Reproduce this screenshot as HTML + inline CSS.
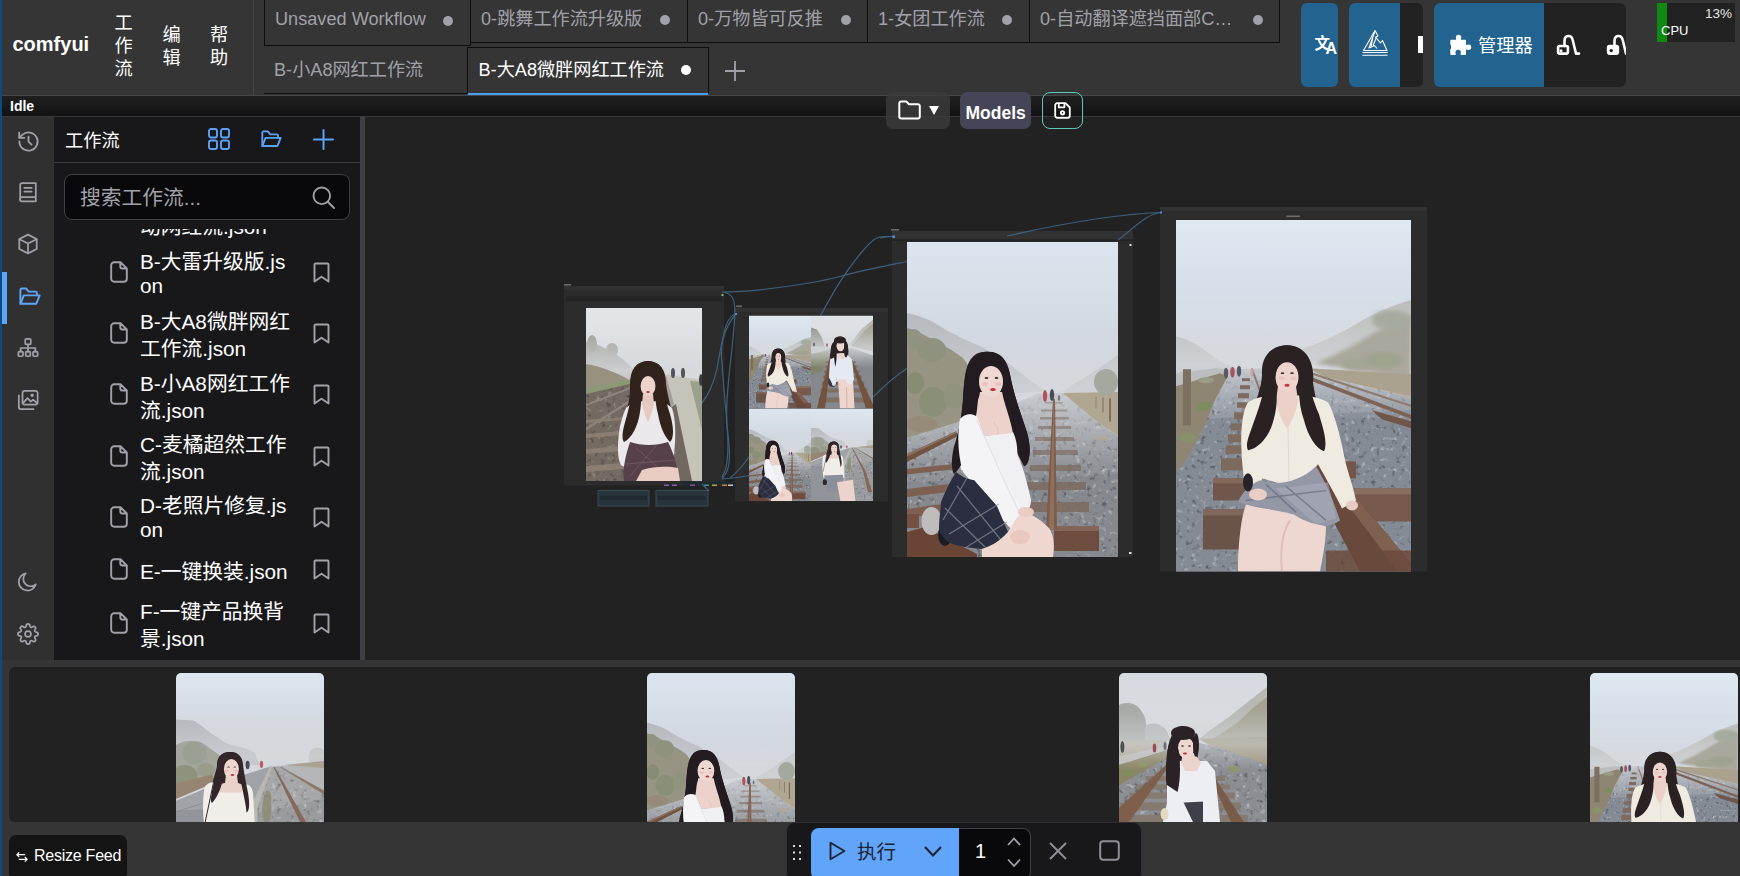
<!DOCTYPE html>
<html lang="zh-CN">
<head>
<meta charset="utf-8">
<title>ComfyUI</title>
<style>
*{box-sizing:border-box;margin:0;padding:0}
html,body{width:1740px;height:876px;overflow:hidden;background:#353535}
body{position:relative;font-family:"Liberation Sans","Noto Sans CJK SC",sans-serif;color:#fff}
.abs{position:absolute}
svg.abs{display:block;overflow:visible}
/* ---------- top bar ---------- */
#topbar{left:0;top:0;width:1740px;height:96px;background:#353535}
#leftstrip{left:0;top:0;width:2px;height:876px;background:#0b4b7d;z-index:50}
#logo{left:12.5px;top:32px;font-weight:bold;font-size:20px;line-height:24px;letter-spacing:0}
.vmenu{font-size:18.2px;line-height:23px;width:18.2px;word-break:break-all;color:#fff}
.tab{height:43px;border:1px solid #0d0d0d;border-top:none;color:#a1a1aa;font-size:18.15px;line-height:24px;white-space:nowrap}
.tab span{position:absolute;left:10px;top:7px}
.tab i{position:absolute;top:15px;width:10px;height:10px;border-radius:50%;background:#a1a1aa}
/* ---------- status ---------- */
#status{left:0;top:96px;width:1740px;height:20px;background:linear-gradient(#1f1f1f,#1a1a1a 45%,#121212)}
#status b{position:absolute;left:10px;top:2px;font-size:14px;line-height:16px}
/* ---------- sidebar ---------- */
#iconcol{left:2px;top:117px;width:52px;height:543px;background:#303030}
#panel{left:54px;top:117px;width:306px;height:543px;background:#18181b;overflow:hidden}
#splitter{left:360px;top:117px;width:5px;height:543px;background:#3e3e44}
#canvas{left:365px;top:117px;width:1375px;height:543px;background:#222}
.fname{position:absolute;left:86px;width:153px;font-size:20.75px;line-height:27px;color:#fff;word-break:break-all}
/* ---------- feed ---------- */
#feed{left:9px;top:667px;width:1740px;height:155px;background:#222;border-radius:6px 0 0 6px;overflow:hidden}
.thumb{position:absolute;top:6px;width:148px;height:149px;border-radius:7px 7px 0 0;overflow:hidden;background:#d4d6da}
</style>
</head>
<body>
<div id="topbar" class="abs"></div>
<div id="leftstrip" class="abs"></div>
<div id="logo" class="abs">comfyui</div>
<div class="abs vmenu" style="left:114.5px;top:12px">工作流</div>
<div class="abs vmenu" style="left:162.5px;top:23.5px">编辑</div>
<div class="abs vmenu" style="left:210px;top:23.5px">帮助</div>
<div class="abs" style="left:253px;top:0;width:1px;height:95px;background:#444"></div>

<!-- tabs row 1 -->
<div class="abs tab" style="left:264px;top:0;width:207px;height:46px"><span>Unsaved Workflow</span><i style="left:178px;top:16px"></i></div>
<div class="abs tab" style="left:470px;top:0;width:218px"><span>0-跳舞工作流升级版</span><i style="left:189px"></i></div>
<div class="abs tab" style="left:687px;top:0;width:181px"><span>0-万物皆可反推</span><i style="left:153px"></i></div>
<div class="abs tab" style="left:867px;top:0;width:163px"><span>1-女团工作流</span><i style="left:134px"></i></div>
<div class="abs tab" style="left:1029px;top:0;width:251px"><span>0-自动翻译遮挡面部C…</span><i style="left:223px"></i></div>
<!-- tabs row 2 -->
<div class="abs tab" style="left:264px;top:47px;width:204px;height:47px;border-left:none;border-right:none"><span style="top:11px">B-小A8网红工作流</span></div>
<div class="abs tab" style="left:467px;top:47px;width:242px;height:49px;border:1px solid #0d0d0d;border-bottom:3px solid #4a9cf0;color:#fff"><span style="top:10px;left:10.5px">B-大A8微胖网红工作流</span><i style="left:213px;top:17px;background:#fff"></i></div>
<svg class="abs" style="left:724px;top:60px" width="22" height="22" viewBox="0 0 22 22"><path d="M11 1v20M1 11h20" stroke="#a1a1aa" stroke-width="1.8" fill="none"/></svg>


<!-- top right buttons -->
<div class="abs" style="left:1301px;top:3px;width:37px;height:84px;background:#23638f;border-radius:6px;overflow:hidden">
<span class="abs" style="left:13.5px;top:30.5px;font-size:15.5px;line-height:20px;font-weight:bold;color:#fff">文</span>
<span class="abs" style="left:24.5px;top:36px;font-size:16px;line-height:20px;font-weight:bold;color:#fff">A</span>
</div>
<div class="abs" style="left:1349px;top:3px;width:74px;height:84px;background:#222;border-radius:6px;overflow:hidden">
<div class="abs" style="left:0;top:0;width:51px;height:84px;background:#23638f"></div>
<svg class="abs" style="left:13px;top:26px" width="26" height="27" viewBox="0 0 26 27"><g fill="none" stroke="#fff" stroke-width="1.100" stroke-linejoin="round"><path d="M1.500 21.500 13 1.500 16 7l-2.500 1.200L18.500 14l2-2.500 4.500 10z"/><path d="M13 2 7 19l5.500-2.500L15 19.500M11.500 5 9 18M14 9.500l-3 7"/><path d="M0.500 23.500h25M0.500 26.300h25"/></g></svg>
<div class="abs" style="left:69px;top:33px;width:8px;height:17px;background:#fff"></div>
</div>
<div class="abs" style="left:1434px;top:3px;width:192px;height:84px;background:#222;border-radius:6px;overflow:hidden">
<div class="abs" style="left:0;top:0;width:110px;height:84px;background:#23638f"></div>
<svg class="abs" style="left:14px;top:31px" width="22" height="22" viewBox="0 0 21 21"><path d="M7.500 3.200a2.600 2.600 0 0 1 5.200 0c0 .8-.4 1.300-.4 1.800 0 .4.300.6.700.6h3.200c.6 0 1 .4 1 1v3.200c0 .4.200.7.600.7.500 0 1-.400 1.800-.400a2.600 2.600 0 0 1 0 5.200c-.8 0-1.300-.400-1.800-.400-.400 0-.600.300-.600.700V19c0 .6-.4 1-1 1h-3.600c-.4 0-.7-.200-.7-.600 0-.500.400-1 .400-1.800a2.600 2.600 0 0 0-5.200 0c0 .800.400 1.300.4 1.800 0 .400-.300.600-.700.600H3.200c-.6 0-1-.4-1-1v-3.400c0-.4-.2-.7-.6-.7-.1 0 .5-.2 0 0 .8 0 1.300-.600 1.300-1.500v-2c0-.9-.5-1.500-1.300-1.500.4 0 .6-.3.600-.7V6.600c0-.6.4-1 1-1h3.900c.4 0 .7-.2.700-.6 0-.5-.3-1-.3-1.800z" fill="#fff"/></svg>
<span class="abs" style="left:44px;top:31px;font-size:18.200px;line-height:24px;color:#fff;white-space:nowrap">管理器</span>
<svg class="abs" style="left:123px;top:31px" width="22" height="21" viewBox="0 0 22 21"><g fill="none" stroke="#fff" stroke-width="2.600" stroke-linecap="round" stroke-linejoin="round"><path d="M7.500 12V7C7.500 0.500 14.500 0.500 15.700 6L19 19.600H22"/><rect x="1.100" y="12" width="9.800" height="7.600" rx="1.500"/></g><circle cx="4" cy="16.800" r="1.500" fill="#fff"/></svg>
<svg class="abs" style="left:172.500px;top:31px" width="22" height="21" viewBox="0 0 22 21"><g fill="none" stroke="#fff" stroke-width="2.600" stroke-linecap="round" stroke-linejoin="round"><path d="M7.500 12V7C7.500 0.500 14.500 0.500 15.700 6L19 19.600H22"/><rect x="1.100" y="12" width="9.800" height="7.600" rx="1.500" fill="#fff"/></g><circle cx="4.200" cy="16.600" r="1.700" fill="#222"/></svg>
</div>
<!-- cpu -->
<div class="abs" style="left:1657px;top:3px;width:78px;height:39px;background:#222;overflow:hidden">
<div class="abs" style="left:0;top:0;width:10px;height:39px;background:#0f8a10"></div>
<span class="abs" style="right:3px;top:3px;font-size:13.500px;line-height:15px;color:#e6e6e6">13%</span>
<span class="abs" style="left:4px;top:20px;font-size:13px;line-height:15px;color:#fff">CPU</span>
</div>
<!-- status bar -->
<div class="abs" style="left:0;top:95px;width:1740px;height:1px;background:#464646"></div>
<div id="status" class="abs"><b>Idle</b></div>
<div class="abs" style="left:0;top:116px;width:1740px;height:1px;background:#3a3a3a"></div>

<!-- sidebar -->
<div id="iconcol" class="abs"></div>
<div id="panel" class="abs">
<div class="abs" id="ptitle" style="left:11px;top:11.5px;font-size:18.2px;line-height:24px">工作流</div>
<svg class="abs" style="left:154px;top:11px" width="22" height="22" viewBox="0 0 22 22"><g fill="none" stroke="#5aa2f8" stroke-width="1.900"><rect x="1" y="1" width="8" height="8.500" rx="2"/><rect x="13" y="1" width="8" height="8.500" rx="2"/><rect x="1" y="12.500" width="8" height="8.500" rx="2"/><rect x="13" y="12.500" width="8" height="8.500" rx="2"/></g></svg>
<svg class="abs" style="left:206px;top:11px" width="22" height="22" viewBox="0 0 24 24"><g fill="none" stroke="#5aa2f8" stroke-width="2" stroke-linecap="round" stroke-linejoin="round"><path d="M2.500 19.500V5.200a1.500 1.500 0 0 1 1.500-1.500h4.600l2.600 3.200h7a1.500 1.500 0 0 1 1.500 1.500v2.400"/><path d="M2.600 19.600 6 10.800h16.600L19 19.600z"/></g></svg>
<svg class="abs" style="left:259px;top:12px" width="21" height="21" viewBox="0 0 21 21"><path d="M10.500 1v19M1 10.500h19" stroke="#5aa2f8" stroke-width="2" stroke-linecap="round" fill="none"/></svg>
<div class="abs" style="left:0;top:45px;width:306px;height:1px;background:#3a3a40"></div>
<div class="abs" style="left:10px;top:57px;width:286px;height:46px;background:#09090b;border:1px solid #3f3f46;border-radius:8px"><span class="abs" style="left:15px;top:9px;font-size:20.75px;line-height:27px;color:#a1a1aa;white-space:nowrap">搜索工作流...</span><svg class="abs" style="left:247px;top:11px" width="23" height="23" viewBox="0 0 23 23"><g fill="none" stroke="#a1a1aa" stroke-width="1.900" stroke-linecap="round"><circle cx="9.800" cy="9.800" r="8.300"/><path d="M16 16l6 6"/></g></svg></div>
<div class="abs" style="left:0;top:112px;width:306px;height:431px;overflow:hidden">
<div class="fname" style="top:-16px">动网红流.json</div>
<div class="fname" style="top:21px;line-height:24px">B-大雷升级版.json</div>
<div class="fname" style="top:78.5px;line-height:27px">B-大A8微胖网红工作流.json</div>
<div class="fname" style="top:140.5px;line-height:27px">B-小A8网红工作流.json</div>
<div class="fname" style="top:201.5px;line-height:27px">C-麦橘超然工作流.json</div>
<div class="fname" style="top:265px;line-height:24px">D-老照片修复.json</div>
<div class="fname" style="top:328.5px;line-height:27px">E-一键换装.json</div>
<div class="fname" style="top:368.5px;line-height:27px">F-一键产品换背景.json</div>
<svg class="abs" style="left:56px;top:32px" width="18" height="22" viewBox="0 0 18 22"><path d="M1.200 4.200a3 3 0 0 1 3-3h6.300l6.300 6.300v10.300a3 3 0 0 1-3 3H4.200a3 3 0 0 1-3-3z M10.300 1.400v4.100a2 2 0 0 0 2 2h4.300" fill="none" stroke="#a1a1aa" stroke-width="1.900" stroke-linejoin="round" stroke-linecap="round"/></svg><svg class="abs" style="left:259px;top:33px" width="17" height="21" viewBox="0 0 17 21"><path d="M1.500 19.500V2.500a1 1 0 0 1 1-1h12a1 1 0 0 1 1 1v17L8.500 14.700z" fill="none" stroke="#a1a1aa" stroke-width="1.900" stroke-linejoin="round"/></svg>
<svg class="abs" style="left:56px;top:93px" width="18" height="22" viewBox="0 0 18 22"><path d="M1.200 4.200a3 3 0 0 1 3-3h6.300l6.300 6.300v10.300a3 3 0 0 1-3 3H4.200a3 3 0 0 1-3-3z M10.300 1.400v4.100a2 2 0 0 0 2 2h4.300" fill="none" stroke="#a1a1aa" stroke-width="1.900" stroke-linejoin="round" stroke-linecap="round"/></svg><svg class="abs" style="left:259px;top:94px" width="17" height="21" viewBox="0 0 17 21"><path d="M1.500 19.500V2.500a1 1 0 0 1 1-1h12a1 1 0 0 1 1 1v17L8.500 14.700z" fill="none" stroke="#a1a1aa" stroke-width="1.900" stroke-linejoin="round"/></svg>
<svg class="abs" style="left:56px;top:154px" width="18" height="22" viewBox="0 0 18 22"><path d="M1.200 4.200a3 3 0 0 1 3-3h6.300l6.300 6.300v10.300a3 3 0 0 1-3 3H4.200a3 3 0 0 1-3-3z M10.300 1.400v4.100a2 2 0 0 0 2 2h4.300" fill="none" stroke="#a1a1aa" stroke-width="1.900" stroke-linejoin="round" stroke-linecap="round"/></svg><svg class="abs" style="left:259px;top:155px" width="17" height="21" viewBox="0 0 17 21"><path d="M1.500 19.500V2.500a1 1 0 0 1 1-1h12a1 1 0 0 1 1 1v17L8.500 14.700z" fill="none" stroke="#a1a1aa" stroke-width="1.900" stroke-linejoin="round"/></svg>
<svg class="abs" style="left:56px;top:216px" width="18" height="22" viewBox="0 0 18 22"><path d="M1.200 4.200a3 3 0 0 1 3-3h6.300l6.300 6.300v10.300a3 3 0 0 1-3 3H4.200a3 3 0 0 1-3-3z M10.300 1.400v4.100a2 2 0 0 0 2 2h4.300" fill="none" stroke="#a1a1aa" stroke-width="1.900" stroke-linejoin="round" stroke-linecap="round"/></svg><svg class="abs" style="left:259px;top:217px" width="17" height="21" viewBox="0 0 17 21"><path d="M1.500 19.500V2.500a1 1 0 0 1 1-1h12a1 1 0 0 1 1 1v17L8.500 14.700z" fill="none" stroke="#a1a1aa" stroke-width="1.900" stroke-linejoin="round"/></svg>
<svg class="abs" style="left:56px;top:277px" width="18" height="22" viewBox="0 0 18 22"><path d="M1.200 4.200a3 3 0 0 1 3-3h6.300l6.300 6.300v10.300a3 3 0 0 1-3 3H4.200a3 3 0 0 1-3-3z M10.300 1.400v4.100a2 2 0 0 0 2 2h4.300" fill="none" stroke="#a1a1aa" stroke-width="1.900" stroke-linejoin="round" stroke-linecap="round"/></svg><svg class="abs" style="left:259px;top:278px" width="17" height="21" viewBox="0 0 17 21"><path d="M1.500 19.500V2.500a1 1 0 0 1 1-1h12a1 1 0 0 1 1 1v17L8.500 14.700z" fill="none" stroke="#a1a1aa" stroke-width="1.900" stroke-linejoin="round"/></svg>
<svg class="abs" style="left:56px;top:329px" width="18" height="22" viewBox="0 0 18 22"><path d="M1.200 4.200a3 3 0 0 1 3-3h6.300l6.300 6.300v10.300a3 3 0 0 1-3 3H4.200a3 3 0 0 1-3-3z M10.300 1.400v4.100a2 2 0 0 0 2 2h4.300" fill="none" stroke="#a1a1aa" stroke-width="1.900" stroke-linejoin="round" stroke-linecap="round"/></svg><svg class="abs" style="left:259px;top:330px" width="17" height="21" viewBox="0 0 17 21"><path d="M1.500 19.500V2.500a1 1 0 0 1 1-1h12a1 1 0 0 1 1 1v17L8.500 14.700z" fill="none" stroke="#a1a1aa" stroke-width="1.900" stroke-linejoin="round"/></svg>
<svg class="abs" style="left:56px;top:383px" width="18" height="22" viewBox="0 0 18 22"><path d="M1.200 4.200a3 3 0 0 1 3-3h6.300l6.300 6.300v10.300a3 3 0 0 1-3 3H4.200a3 3 0 0 1-3-3z M10.300 1.400v4.100a2 2 0 0 0 2 2h4.300" fill="none" stroke="#a1a1aa" stroke-width="1.900" stroke-linejoin="round" stroke-linecap="round"/></svg><svg class="abs" style="left:259px;top:384px" width="17" height="21" viewBox="0 0 17 21"><path d="M1.500 19.500V2.500a1 1 0 0 1 1-1h12a1 1 0 0 1 1 1v17L8.500 14.700z" fill="none" stroke="#a1a1aa" stroke-width="1.900" stroke-linejoin="round"/></svg>
</div>
</div>

<!-- sidebar icons -->
<div class="abs" style="left:2px;top:272px;width:5px;height:52px;background:#60a5fa"></div>
<svg class="abs ic" style="left:16.5px;top:129.5px" width="23" height="23" viewBox="0 0 24 24"><g fill="none" stroke="#a1a1aa" stroke-width="1.9" stroke-linecap="round" stroke-linejoin="round"><path d="M2.5 12a9.5 9.5 0 1 0 3-6.9L2.5 8"/><path d="M2.3 2.8V8.2H7.7"/><path d="M12 7v5.2l3.2 3"/></g></svg>
<svg class="abs ic" style="left:17px;top:181px" width="22" height="22" viewBox="0 0 24 24"><g fill="none" stroke="#a1a1aa" stroke-width="1.9" stroke-linecap="round" stroke-linejoin="round"><path d="M3.5 19.5V4.2a2 2 0 0 1 2-2h15v20h-15a2 2 0 0 1 0-4.6h15"/><path d="M8 7.5h8M8 11.5h8"/></g></svg>
<svg class="abs ic" style="left:17px;top:233px" width="22" height="22" viewBox="0 0 24 24"><g fill="none" stroke="#a1a1aa" stroke-width="1.9" stroke-linecap="round" stroke-linejoin="round"><path d="M12 1.8 21.5 6.6v10.8L12 22.2 2.5 17.4V6.6z"/><path d="M2.8 6.8 12 11.5l9.2-4.7M12 11.5v10.4"/></g></svg>
<svg class="abs ic" style="left:18px;top:285px" width="23" height="23" viewBox="0 0 24 24"><g fill="none" stroke="#60a5fa" stroke-width="2" stroke-linecap="round" stroke-linejoin="round"><path d="M2.5 19.5V5.2a1.5 1.5 0 0 1 1.5-1.5h4.6l2.6 3.2h7a1.5 1.5 0 0 1 1.5 1.5v2.4"/><path d="M2.6 19.6 6 10.8h16.6L19 19.6z"/></g></svg>
<svg class="abs ic" style="left:17px;top:337px" width="22" height="22" viewBox="0 0 24 24"><g fill="none" stroke="#a1a1aa" stroke-width="1.9" stroke-linecap="round" stroke-linejoin="round"><rect x="9" y="2" width="6" height="6" rx="1"/><rect x="1.5" y="16" width="5" height="5" rx="1"/><rect x="9.5" y="16" width="5" height="5" rx="1"/><rect x="17.5" y="16" width="5" height="5" rx="1"/><path d="M12 8v8M4 16v-4h16v4"/></g></svg>
<svg class="abs ic" style="left:17px;top:389px" width="22" height="22" viewBox="0 0 24 24"><g fill="none" stroke="#a1a1aa" stroke-width="1.9" stroke-linecap="round" stroke-linejoin="round"><rect x="6" y="2" width="16.5" height="15" rx="2.5"/><path d="M2 7v12.5a2.5 2.5 0 0 0 2.500 2.500H18"/><path d="M6.500 15.500 11.500 10l3.500 3.700 2.500-2.200 4.500 4"/><circle cx="16.500" cy="6.800" r="1"/></g></svg>
<svg class="abs ic" style="left:17px;top:571px" width="22" height="22" viewBox="0 0 24 24"><path d="M20.500 14.500A9.500 9.500 0 1 1 9.500 2.500 7.600 7.600 0 0 0 20.500 14.500z" fill="none" stroke="#a1a1aa" stroke-width="1.9" stroke-linejoin="round"/></svg>
<svg class="abs ic" style="left:17px;top:623px" width="22" height="22" viewBox="0 0 24 24"><g fill="none" stroke="#a1a1aa" stroke-width="1.9" stroke-linecap="round" stroke-linejoin="round"><circle cx="12" cy="12" r="3.200"/><path d="M19.400 15a1.650 1.650 0 0 0 .330 1.820l.060.060a2 2 0 1 1-2.830 2.830l-.060-.060a1.650 1.650 0 0 0-1.820-.330 1.650 1.650 0 0 0-1 1.510V21a2 2 0 1 1-4 0v-.090A1.650 1.650 0 0 0 9 19.400a1.650 1.650 0 0 0-1.820.330l-.060.060a2 2 0 1 1-2.830-2.830l.060-.060A1.650 1.650 0 0 0 4.680 15a1.650 1.650 0 0 0-1.510-1H3a2 2 0 1 1 0-4h.090A1.650 1.650 0 0 0 4.600 9a1.650 1.650 0 0 0-.330-1.820l-.060-.060a2 2 0 1 1 2.830-2.830l.060.060A1.650 1.650 0 0 0 9 4.680a1.650 1.650 0 0 0 1-1.510V3a2 2 0 1 1 4 0v.090a1.650 1.650 0 0 0 1 1.510 1.650 1.650 0 0 0 1.820-.330l.060-.060a2 2 0 1 1 2.830 2.830l-.060.060A1.650 1.650 0 0 0 19.400 9a1.650 1.650 0 0 0 1.510 1H21a2 2 0 1 1 0 4h-.090a1.650 1.650 0 0 0-1.510 1z"/></g></svg>
<div id="splitter" class="abs"></div>
<div id="canvas" class="abs"></div>
<!--CANVAS--><svg class="abs" style="left:365px;top:117px" width="1375" height="543" viewBox="0 0 1375 543" overflow="hidden"><defs><filter id="bl0.4" x="-5%" y="-5%" width="110%" height="110%"><feGaussianBlur stdDeviation="0.4"/></filter><filter id="bl0.5" x="-5%" y="-5%" width="110%" height="110%"><feGaussianBlur stdDeviation="0.5"/></filter><filter id="bl0.7" x="-5%" y="-5%" width="110%" height="110%"><feGaussianBlur stdDeviation="0.7"/></filter><filter id="bl0.8" x="-5%" y="-5%" width="110%" height="110%"><feGaussianBlur stdDeviation="0.8"/></filter><filter id="bl1" x="-5%" y="-5%" width="110%" height="110%"><feGaussianBlur stdDeviation="1"/></filter><filter id="bl2" x="-5%" y="-5%" width="110%" height="110%"><feGaussianBlur stdDeviation="2"/></filter><filter id="gr1" x="0" y="0" width="100%" height="100%"><feTurbulence type="fractalNoise" baseFrequency="0.2" numOctaves="2" seed="3" result="n"/><feColorMatrix in="n" type="matrix" values="0 0 0 0 1  0 0 0 0 1  0 0 0 0 1  2.4 0 0 0 -1.42" result="a"/><feComposite in="SourceGraphic" in2="a" operator="in"/></filter><filter id="gr2" x="0" y="0" width="100%" height="100%"><feTurbulence type="fractalNoise" baseFrequency="0.19" numOctaves="2" seed="11" result="n"/><feColorMatrix in="n" type="matrix" values="0 0 0 0 1  0 0 0 0 1  0 0 0 0 1  2.4 0 0 0 -1.5" result="a"/><feComposite in="SourceGraphic" in2="a" operator="in"/></filter><linearGradient id="fog" x1="0" y1="0" x2="0" y2="1"><stop offset="0" stop-color="#d6d9dd" stop-opacity="0"/><stop offset=".58" stop-color="#d6d9dd" stop-opacity=".78"/><stop offset="1" stop-color="#d6d9dd" stop-opacity="0"/></linearGradient></defs><rect x="199" y="169" width="160" height="199.5" fill="#2c2c2c"/><rect x="199" y="169" width="160" height="4" fill="#323232"/><rect x="201" y="179" width="156" height="5.500" fill="#242424"/><rect x="370" y="191" width="153" height="193.5" fill="#2c2c2c"/><rect x="370" y="191" width="153" height="4" fill="#323232"/><rect x="527" y="114" width="241" height="326" fill="#2c2c2c"/><rect x="527" y="114" width="241" height="8.5" fill="#323232"/><rect x="527" y="122.5" width="241" height="1.5" fill="#232323"/><rect x="795" y="90" width="267" height="364.5" fill="#2c2c2c"/><rect x="795" y="90" width="267" height="4" fill="#323232"/><rect x="199" y="167" width="7" height="1.600" fill="#6a6a6a"/><rect x="371" y="188.5" width="6" height="1.600" fill="#6a6a6a"/><rect x="526" y="112" width="8" height="1.600" fill="#6a6a6a"/><rect x="921" y="98.5" width="14" height="1.600" fill="#6a6a6a"/><rect x="233" y="373.5" width="51" height="15.500" fill="#27343b" stroke="#3a4b54" stroke-width="1"/><rect x="235" y="379" width="47" height="4" fill="#1f292e"/><rect x="291" y="373.5" width="52" height="15.500" fill="#27343b" stroke="#3a4b54" stroke-width="1"/><rect x="293" y="379" width="48" height="4" fill="#1f292e"/><rect x="316" y="364.5" width="54" height="4.500" fill="#1d2a30"/><rect x="299" y="367.5" width="5" height="1.500" fill="#8a5fb0"/><rect x="307" y="367.5" width="5" height="1.500" fill="#8a5fb0"/><rect x="325" y="367.5" width="5" height="1.500" fill="#7b4fa0"/><rect x="339" y="367.5" width="5" height="1.500" fill="#3f8f8a"/><rect x="347" y="367.5" width="5" height="1.500" fill="#b9a23c"/><rect x="357" y="367.5" width="5" height="1.500" fill="#c78a3c"/><rect x="363" y="367.5" width="5" height="1.500" fill="#c7c7c7"/><g fill="none" stroke="#3d5f7b" stroke-width="1.25"><path d="M357.5 175 C 395 175, 455 165, 477 159 S 525 148, 542 144.5"/><path d="M753 123 C 765 115, 780 97, 796 95.5"/><path d="M642 119 C 695 107, 755 97, 796 95.5"/><path d="M455.5 198.5 C 467 178, 477 159, 495.5 136.5 S 515 121, 528.5 119.5"/><path d="M357.5 175 C 368 176, 371 183, 369.5 203 C 367 243, 359 283, 362.5 313 C 365 333, 367 353, 357 361.5"/><path d="M371 197 C 361 199, 359 213, 351.7 253 C 347 273, 341 281, 336.5 286.5"/><path d="M371 197 C 357 213, 355 233, 357 245 C 359 283, 365 323, 362.5 338 C 362 351, 359 357, 357 360"/><path d="M357 362 C 370 361, 377 360, 384 358.5"/><path d="M365 361 C 373 355, 379 347, 384 340"/><path d="M508 280 C 520 268, 530 259, 542 251.5"/><path d="M515 121 L 528 119"/><path d="M337 367 C 341 371, 343 373, 344 374"/></g><rect x="527.5" y="118.5" width="2.500" height="2.500" fill="#4f8fd0"/><rect x="356.5" y="177" width="2" height="2" fill="#6fbf5f"/><rect x="370" y="196" width="2" height="2" fill="#4f8fd0"/><rect x="795" y="94.5" width="2" height="2" fill="#4f8fd0"/><svg x="221" y="191" width="116" height="173" viewBox="0 0 116 173" preserveAspectRatio="none" overflow="hidden"><defs><linearGradient id="g1" x1="0" y1="0" x2="0" y2="1"><stop offset="0" stop-color="#e2e6e9"/><stop offset="0.3" stop-color="#dcdfe1"/><stop offset="0.45" stop-color="#d6d7d8"/><stop offset="1" stop-color="#d6d7d8"/></linearGradient></defs><rect width="116" height="173" fill="url(#g1)"/><g filter="url(#bl0.7)"><path d="M0 34 C8 34 14 38 22 42 C32 46 40 54 48 62 C54 68 58 72 62 76 L0 88Z" fill="#a9a8a3" /><ellipse cx="6" cy="36" rx="5" ry="9" fill="#a09f9a" /><ellipse cx="26" cy="42" rx="6" ry="7" fill="#a5a49f" /><rect x="0" y="20" width="116" height="75" fill="url(#fog)"/><path d="M0 56 C14 58 28 64 40 70 L52 78 L0 86Z" fill="#96927f" /><polygon points="0,80 46,71 50,75 0,88" fill="#8d9976" /><polygon points="0,86 52,74 78,70 100,173 0,173" fill="#736a62" /><polygon points="0,86 52,74 78,70 100,173 0,173" fill="#3a3530" filter="url(#gr1)"/><polygon points="0,86 52,74 78,70 100,173 0,173" fill="#b9b2aa" filter="url(#gr2)"/><line x1="0" y1="97" x2="52" y2="77" stroke="#8e837b" stroke-width="2" stroke-linecap="round" /><line x1="0" y1="121" x2="60" y2="83" stroke="#8e837b" stroke-width="2.5" stroke-linecap="round" /><polygon points="0,112 48,108 48,111 0,115" fill="#8f8073" opacity=".85"/><polygon points="0,126 48,122 48,126 0,130" fill="#8f8073" opacity=".85"/><polygon points="0,141 48,137 48,142 0,146" fill="#8f8073" opacity=".85"/><polygon points="0,158 48,154 48,160 0,164" fill="#8f8073" opacity=".85"/><polygon points="76,66 116,72 116,173 100,173" fill="#c6c3b9" /><polygon points="104,73 116,74 116,122" fill="#9aa08c" /><polygon points="84,100 94,173 106,173 90,96" fill="#6f6861" /><polygon points="78,70 84,100 88,96 80,68" fill="#a19e97" /><ellipse cx="87" cy="65" rx="2" ry="5" fill="#50535b" /><ellipse cx="97" cy="65" rx="2" ry="5" fill="#53555c" /><ellipse cx="115" cy="72" rx="2" ry="6" fill="#3c3d46" /><path d="M62 53 C74 53 80 62 80 76 C82 92 88 106 88 122 C88 130 86 134 84 134 C78 128 74 118 72 108 L52 108 C50 120 44 130 38 134 C34 128 36 116 40 104 C44 92 44 84 44 76 C44 62 50 53 62 53Z" fill="#33231f" /><path d="M40 100 C46 94 54 92 62 94 C70 92 80 94 86 100 C90 112 90 130 88 146 C86 154 84 158 80 160 L44 160 L36 158 C30 152 32 130 34 118 C36 110 38 104 40 100Z" fill="#eae8eb" /><path d="M57 86 L67 86 L68 96 C66 104 64 110 62 114 C60 110 58 104 56 96Z" fill="#e6c9c0" /><ellipse cx="62" cy="78" rx="7.5" ry="10" fill="#ecd3cb" /><path d="M62 53 C52 53 46 62 46 76 C46 90 42 104 38 118 C36 126 36 132 38 134 C46 130 52 118 54 104 C56 92 55 84 54 78 C55 72 58 68 63 66 C67 68 70 72 70 78 C69 86 69 94 72 106 C74 118 78 128 84 134 C88 130 88 120 84 106 C80 94 78 86 78 76 C78 62 72 53 62 53Z" fill="#33231f" /><ellipse cx="62" cy="84" rx="1.8" ry="1" fill="#c22d38" /><path d="M44 134 C56 138 70 138 82 134 C88 146 92 160 92 168 L90 173 L38 173 C36 162 40 146 44 134Z" fill="#574049" /><path d="M50 140 L84 170 M70 138 L44 168 M40 156 L90 152" fill="none" stroke="#7c5c66" stroke-width="1" opacity=".7"/><path d="M56 162 C68 158 82 158 92 160 L94 173 L50 173Z" fill="#e9cdc4" /></g></svg><svg x="384" y="198.5" width="62" height="93" viewBox="0 0 235 351" preserveAspectRatio="none" overflow="hidden"><defs><linearGradient id="g2" x1="0" y1="0" x2="0" y2="1"><stop offset="0" stop-color="#dfe9f2"/><stop offset="0.2" stop-color="#d6dfe9"/><stop offset="0.4" stop-color="#d6dbe1"/><stop offset="1" stop-color="#d6dbe1"/></linearGradient></defs><rect width="235" height="351" fill="url(#g2)"/><g filter="url(#bl0.7)"><path d="M235 80 C215 86 200 92 180 104 C160 116 140 124 118 132 L96 142 L235 150Z" fill="#b9bab8" /><path d="M0 116 C10 118 22 124 34 134 C44 142 54 146 64 149 L0 154Z" fill="#b1b6b8" /><polygon points="0,158 60,149 125,147 235,164 235,351 0,351" fill="#9196a0" /><path d="M0 200 L235 190 L235 351 L0 351Z" fill="#828892" opacity=".8"/><polygon points="132,148 235,156 235,178 150,157" fill="#a89f8b" /><polygon points="0,158 60,149 125,147 235,164 235,351 0,351" fill="#3c4048" filter="url(#gr1)"/><polygon points="0,158 60,149 125,147 235,164 235,351 0,351" fill="#d4d7db" filter="url(#gr2)"/><rect x="0" y="70" width="235" height="130" fill="url(#fog)"/><path d="M235 96 C218 101 200 111 184 121 C170 129 158 135 140 143 L235 160Z" fill="#aaa79c" filter="url(#bl2)"/><ellipse cx="216" cy="100" rx="20" ry="10" fill="#a6ab9f" filter="url(#bl2)"/><ellipse cx="207" cy="140" rx="20" ry="8" fill="#9ea38f" filter="url(#bl2)"/><ellipse cx="180" cy="144" rx="13" ry="6" fill="#a2a692" filter="url(#bl2)"/><polygon points="132,148 235,154 235,176 150,157" fill="#aaa18e" /><polygon points="0,153 40,148 56,150 0,172" fill="#bcbdbe" /><path d="M0 166 L44 153 L52 156 C44 170 38 180 34 192 C28 208 20 224 12 236 L0 252Z" fill="#8f8573" /><ellipse cx="28" cy="186" rx="8" ry="5" fill="#7f8c62" /><ellipse cx="12" cy="218" rx="8" ry="5" fill="#86936a" /><ellipse cx="30" cy="160" rx="8" ry="3" fill="#9a9d86" /><rect x="7" y="149" width="8" height="56" fill="#7b6f60" /><line x1="132" y1="152" x2="236" y2="186" stroke="#8e7b6e" stroke-width="2.2" stroke-linecap="round" /><line x1="136" y1="159" x2="236" y2="197" stroke="#7c6456" stroke-width="3.6" stroke-linecap="round" /><polygon points="196,190 235,201 235,208 206,199" fill="#705649" /><rect x="66" y="158" width="8" height="3" fill="#7e6a5f" /><rect x="64" y="165" width="10" height="4" fill="#7e6a5f" /><rect x="62" y="173" width="11" height="5" fill="#7e6a5f" /><rect x="61" y="182" width="11" height="5.5" fill="#7e6a5f" /><rect x="58" y="192" width="14" height="7" fill="#7e6a5f" /><rect x="55" y="203" width="17" height="7" fill="#7e6a5f" /><rect x="52" y="214" width="20" height="8" fill="#7e6a5f" /><rect x="49.5" y="225" width="22.5" height="8.5" fill="#7e6a5f" /><rect x="45" y="238" width="29" height="12" fill="#7e6a5f" /><rect x="37" y="258" width="48" height="22" fill="#6f564c" /><rect x="37" y="258" width="48" height="5" fill="#84695d" /><rect x="27" y="289" width="60" height="40" fill="#6b5249" /><rect x="27" y="289" width="60" height="6" fill="#82675b" /><rect x="172" y="268" width="64" height="33" fill="#775a4e" /><rect x="172" y="268" width="64" height="6" fill="#8a6e61" /><rect x="167" y="241" width="13" height="17" fill="#735549" /><line x1="76" y1="149" x2="86" y2="176" stroke="#8c786c" stroke-width="2" stroke-linecap="round" /><polygon points="86,152 90,152 168,262 236,344 236,351 184,351 141,270" fill="#6a4a3c" /><polygon points="146,250 156,248 236,344 236,351 222,351" fill="#80604f" /><polygon points="150,330 236,330 236,351 150,351" fill="#6b4a3d" opacity=".85"/><ellipse cx="50" cy="153" rx="2.2" ry="5.5" fill="#5c5863" /><ellipse cx="56.5" cy="152" rx="2.2" ry="5.5" fill="#a8535e" /><ellipse cx="63" cy="151" rx="2.2" ry="5.5" fill="#525866" /><ellipse cx="76" cy="152" rx="1.6" ry="4.5" fill="#c9a3ab" /><path d="M111 125 C130 125 139 142 137 162 C139 180 146 196 149 212 C151 222 152 228 148 231 C138 228 128 216 126 200 L96 200 C94 216 84 226 72 230 C68 224 72 210 75 196 C80 180 86 166 86 154 C85 138 94 125 111 125Z" fill="#2a2124" /><path d="M72 182 C82 176 96 174 111 176 C126 174 142 176 152 182 C160 196 166 224 170 244 C174 258 178 270 180 280 L166 288 C160 276 150 258 142 244 L139 248 C132 256 120 262 111 266 C102 262 92 260 86 258 L84 272 L70 270 C66 250 64 220 66 204 C67 194 69 187 72 182Z" fill="#f0ebe1" /><path d="M112 206 L113 262" fill="none" stroke="#ded8cc" stroke-width="1"/><path d="M102 166 L120 166 L122 180 C120 194 114 204 111 208 C108 204 102 194 100 180Z" fill="#ebd0c8" /><ellipse cx="111" cy="157" rx="11.5" ry="15" fill="#edd5ce" /><ellipse cx="105.5" cy="158" rx="3" ry="2" fill="#e7bcb8" opacity=".7"/><ellipse cx="117" cy="158" rx="3" ry="2" fill="#e7bcb8" opacity=".7"/><ellipse cx="106.5" cy="153" rx="1.8" ry="0.9" fill="#3a2c2e" /><ellipse cx="116" cy="153" rx="1.8" ry="0.9" fill="#3a2c2e" /><ellipse cx="111" cy="165" rx="2.6" ry="1.5" fill="#c4303a" /><path d="M111 125 C96 125 87 138 89 156 C89 172 82 190 77 204 C73 216 69 224 72 230 C83 228 94 216 98 198 C102 184 101 170 99 158 C100 148 104 141 112 137 C119 141 123 148 124 158 C122 170 123 186 128 200 C132 216 140 228 148 231 C152 222 147 208 143 194 C137 180 133 168 134 154 C135 138 126 125 111 125Z" fill="#2a2124" /><path d="M84 260 C100 266 124 262 140 246 C150 262 158 282 164 300 C150 310 132 306 118 294 C104 290 84 288 62 282 C66 272 74 264 84 260Z" fill="#9497a6" /><path d="M100 268 L152 262 L160 298 L140 304Z" fill="#a9adba" opacity=".55"/><path d="M90 264 L120 292 M110 266 L150 300 M70 280 L150 270" fill="none" stroke="#5f6579" stroke-width="1.5" opacity=".6"/><path d="M70 284 C84 288 104 290 118 294 C132 304 146 304 150 306 C150 322 146 340 144 351 L62 351 C62 330 64 300 70 284Z" fill="#eed7d1" /><path d="M106 351 C104 330 106 312 114 300" fill="none" stroke="#d9b9b1" stroke-width="2" opacity=".8"/><ellipse cx="82" cy="274" rx="9" ry="6" fill="#eacdc5" /><ellipse cx="176" cy="285" rx="6" ry="5" fill="#e9cbc3" /><ellipse cx="72" cy="262" rx="5" ry="9" fill="#26242a" /></g></svg><svg x="446" y="198.5" width="62" height="93" viewBox="0 0 62 93" preserveAspectRatio="none" overflow="hidden"><defs><linearGradient id="g3" x1="0" y1="0" x2="0" y2="1"><stop offset="0" stop-color="#dde1e6"/><stop offset="0.18" stop-color="#dfe1e4"/><stop offset="0.33" stop-color="#dadbdc"/><stop offset="1" stop-color="#dadbdc"/></linearGradient></defs><rect width="62" height="93" fill="url(#g3)"/><g filter="url(#bl0.4)"><polygon points="62,4 50,14 38,30 62,32" fill="#b7b7b2" /><polygon points="0,12 6,14 11,22 14,32 0,34" fill="#8f9287" /><polygon points="62,8 54,15 46,24 40,31 62,36" fill="#a19d8d" /><polygon points="0,31 18,31 14,38 0,40" fill="#bbbbb9" /><polygon points="0,40 19,33 42,33 62,40 62,93 0,93" fill="#85888c" /><polygon points="0,38 16,36 19,40 10,56 0,60" fill="#80836a" /><rect x="0" y="8" width="62" height="44" fill="url(#fog)"/><rect x="14.8" y="46" width="30.04" height="1.5" fill="#7d6f64" /><rect x="14" y="50" width="32.52" height="2" fill="#7d6f64" /><rect x="13" y="55" width="35.62" height="2.5" fill="#7d6f64" /><rect x="12" y="60" width="38.72" height="3" fill="#7d6f64" /><rect x="10.8" y="66" width="42.44" height="3.5" fill="#7d6f64" /><rect x="9.4" y="73" width="46.78" height="4" fill="#7d6f64" /><rect x="7.6" y="82" width="52.36" height="5" fill="#7d6f64" /><polygon points="19,40 20.5,40 14,93 6,93" fill="#73523f" /><polygon points="39.5,44 41,44 62,89 62,93 55,93" fill="#73523f" /><ellipse cx="3" cy="29" rx="0.8" ry="2" fill="#50535c" /><ellipse cx="16" cy="29.5" rx="0.8" ry="1.8" fill="#a04a55" /><ellipse cx="29" cy="36" rx="8.5" ry="15" fill="#2a2024" /><ellipse cx="23" cy="44" rx="4" ry="12" fill="#2a2024" /><polygon points="19,43 25,38 35,38 41,44 42,62 36,66 24,66 19,60" fill="#e5e9f1" /><ellipse cx="30.5" cy="40.5" rx="4" ry="3" fill="#ebd2c9" /><ellipse cx="29.5" cy="30.5" rx="4" ry="5.2" fill="#edd6cf" /><ellipse cx="29" cy="24.5" rx="6" ry="3.5" fill="#2a2024" /><ellipse cx="22.5" cy="40" rx="3.2" ry="13" fill="#2a2024" /><ellipse cx="35" cy="34" rx="2" ry="8" fill="#2a2024" /><ellipse cx="21.5" cy="66" rx="4.5" ry="5.5" fill="#3a3a42" /><ellipse cx="23" cy="68" rx="2" ry="2.5" fill="#d9dade" /><polygon points="27,64 42,63 43.5,93 29,93" fill="#edd4cc" /><polygon points="19,44 23,42 26,66 22,70 18,62" fill="#e5e9f1" /><polygon points="37,42 41,44 43,64 39,70 35,66" fill="#e5e9f1" /><line x1="35.5" y1="72" x2="36" y2="93" stroke="#d2b1a8" stroke-width="1" stroke-linecap="round" /></g></svg><svg x="384" y="291.5" width="62" height="92.5" viewBox="0 0 211 315" preserveAspectRatio="none" overflow="hidden"><defs><linearGradient id="g4" x1="0" y1="0" x2="0" y2="1"><stop offset="0" stop-color="#dce5ef"/><stop offset="0.3" stop-color="#d1d8e1"/><stop offset="0.48" stop-color="#d2d6db"/><stop offset="1" stop-color="#d2d6db"/></linearGradient></defs><rect width="211" height="315" fill="url(#g4)"/><g filter="url(#bl0.7)"><path d="M0 71 C10 73 18 76 26 80 C36 86 42 90 49 93 C58 98 66 101 73 104 C84 110 92 116 101 121 C110 128 116 133 123 138 L138 149 L0 160Z" fill="#b0b4b8" /><path d="M211 113 C200 120 194 125 186 130 C178 136 172 139 167 142 L154 150 L211 158Z" fill="#b9bcbd" /><polygon points="0,196 52,180 74,176 130,152 158,151 188,178 211,194 211,315 0,315" fill="#8f9398" /><polygon points="0,240 211,232 211,315 0,315" fill="#83878c" opacity=".75"/><polygon points="0,196 52,180 74,176 130,152 158,151 188,178 211,194 211,315 0,315" fill="#3c4048" filter="url(#gr1)"/><polygon points="0,196 52,180 74,176 130,152 158,151 188,178 211,194 211,315 0,315" fill="#d4d7db" filter="url(#gr2)"/><ellipse cx="195" cy="196" rx="8" ry="3" fill="#9b917f" /><rect x="0" y="55" width="211" height="170" fill="url(#fog)"/><path d="M0 86 C8 88 14 91 21 95 C30 100 35 103 41 106 C48 110 52 113 56 116 C64 126 70 140 74 178 L52 180 L0 196Z" fill="#989483" /><ellipse cx="25" cy="108" rx="14" ry="12" fill="#8e927e" /><ellipse cx="7" cy="97" rx="8" ry="10" fill="#8f937f" /><ellipse cx="26" cy="160" rx="14" ry="15" fill="#8a8f78" /><ellipse cx="8" cy="141" rx="9" ry="11" fill="#878c74" /><ellipse cx="47" cy="154" rx="10" ry="13" fill="#90947e" /><ellipse cx="14" cy="182" rx="16" ry="8" fill="#968b78" /><polygon points="156,151 211,150 211,194 188,178" fill="#b0a792" /><ellipse cx="199" cy="140" rx="12" ry="13" fill="#a3a99f" /><line x1="203" y1="157" x2="203" y2="179" stroke="#6c5a4c" stroke-width="1.4" stroke-linecap="round" /><line x1="196" y1="156" x2="196" y2="170" stroke="#7c6a5c" stroke-width="1" stroke-linecap="round" /><line x1="189" y1="155" x2="189" y2="166" stroke="#8c7a6c" stroke-width="0.8" stroke-linecap="round" /><polygon points="0,212 49,189.5 51,194 0,220" fill="#70533f" /><polygon points="0,212 49,189.5 49.5,191 0,214.5" fill="#8d7160" /><polygon points="0,227 46,222 46,227.5 0,232.5" fill="#7e6152" /><polygon points="0,247 42,242 42,250 0,255" fill="#7e6152" /><polygon points="0,267 34,262 34,271 0,276" fill="#7e6152" /><rect x="138" y="160" width="18" height="1.5" fill="#7d6a60" opacity="0.45"/><rect x="134" y="167.5" width="26" height="2" fill="#7d6a60" opacity="0.48375"/><rect x="133" y="175" width="29" height="2.5" fill="#7d6a60" opacity="0.5175"/><rect x="131" y="184" width="33" height="3" fill="#7d6a60" opacity="0.558"/><rect x="128" y="195" width="39" height="4" fill="#7d6a60" opacity="0.6075"/><rect x="126" y="208" width="45" height="5" fill="#7d6a60" opacity="0.666"/><rect x="123" y="223" width="51" height="6" fill="#7d6a60" opacity="0.7335"/><rect x="120" y="240" width="59" height="8" fill="#7d6a60" opacity="0.81"/><rect x="118" y="260" width="64" height="10" fill="#7d6a60" opacity="0.9"/><rect x="147" y="284" width="45" height="25" fill="#6e4d41" /><rect x="147" y="284" width="45" height="5" fill="#85655a" /><polygon points="146,157 148,157 150,288 139,288" fill="#7d5b48" /><polygon points="146.5,157 147.5,157 147,288 142,288" fill="#97786a" opacity=".7"/><ellipse cx="138" cy="154" rx="2.2" ry="6" fill="#b45058" /><ellipse cx="145" cy="153" rx="2.2" ry="6" fill="#4a4c58" /><ellipse cx="152" cy="156" rx="1.2" ry="3" fill="#77747c" /><path d="M0 290 L18 285 L70 312 L70 315 L0 315Z" fill="#6a4435" /><rect x="0" y="272" width="12" height="14" fill="#75503f" /><ellipse cx="24.5" cy="279" rx="10" ry="14" fill="#bfbdbc" /><ellipse cx="38" cy="293" rx="7" ry="11" fill="#1f1d22" /><path d="M77 110 C92 108 100 116 103 132 C106 150 112 166 117 182 C122 196 124 206 122 216 C121 222 119 224 117 224 C110 212 104 196 100 184 L64 190 C60 206 54 220 47 232 C43 224 45 210 49 198 C53 184 55 172 56 160 C56 146 58 130 62 122 C66 114 70 111 77 110Z" fill="#241c20" /><path d="M53 177 C58 172 64 170 70 172 L78 194 L106 190 C110 198 111 208 110 219 C112 230 118 244 122 258 L116 268 L104 262 L98 238 L54 228 C51 212 51 192 53 177Z" fill="#f0f0f2" /><path d="M73 150 L95 150 C97 160 100 168 102 175 C104 182 105 186 106 191 L78 194 L69 172 L61 171 C66 166 72 160 73 150Z" fill="#ecd2ca" /><path d="M86 180 C90 184 92 188 91 192" fill="none" stroke="#d9b6ad" stroke-width="1" opacity=".7"/><ellipse cx="84" cy="139.5" rx="12" ry="15.5" fill="#efd8d2" /><ellipse cx="78" cy="142" rx="3" ry="2" fill="#e8b9b6" opacity=".7"/><ellipse cx="91" cy="142" rx="3" ry="2" fill="#e8b9b6" opacity=".7"/><ellipse cx="79.5" cy="136" rx="1.9" ry="0.9" fill="#3a2c2e" /><ellipse cx="89.5" cy="136" rx="1.9" ry="0.9" fill="#3a2c2e" /><ellipse cx="86" cy="147.5" rx="2.8" ry="1.5" fill="#c22d38" /><path d="M77 110 C66 110 60 120 58 134 C56 150 56 168 52 186 C49 202 44 220 47 232 C56 224 62 208 66 190 C70 172 72 156 71 142 C71 132 74 124 84 121 C92 124 97 132 97 142 C98 158 102 174 108 188 C112 200 116 214 117 224 C124 220 124 204 120 190 C114 172 108 156 104 138 C102 122 94 108 77 110Z" fill="#241c20" /><path d="M53 177 C57 172 64 171 69 174 L78 196 L96 232 L114 268 C118 274 118 280 114 286 L104 287 C96 278 90 272 84 264 L56 230 C51 214 50 194 53 177Z" fill="#f4f4f6" /><path d="M70 178 L96 236 L112 270" fill="none" stroke="#dcdce2" stroke-width="1.2" opacity=".8"/><path d="M110 212 C116 224 120 240 124 258 C124 266 120 270 116 268 L106 244Z" fill="#f0f0f2" /><path d="M49 230 C56 236 64 238 67 238 L90 264 L101 290 C92 300 84 304 75 307 C62 306 50 304 43 301 C36 296 32 290 32 286 C32 276 34 266 34 260 C38 250 44 238 49 230Z" fill="#2b2f3f" /><path d="M50 244 L94 298 M38 266 L78 305 M42 292 L92 262 M58 306 L100 280 M36 278 L60 236" fill="none" stroke="#9095a3" stroke-width="1.2" opacity=".65"/><path d="M101 290 C106 282 110 274 116 270 C126 272 136 280 142 286 C146 292 148 300 146 315 L75 315 L75 307 C84 304 92 300 101 290Z" fill="#efd6ce" /><ellipse cx="119" cy="270" rx="8" ry="5" fill="#eaccc3" /><ellipse cx="113" cy="295" rx="10" ry="7" fill="#e8c8bf" /></g></svg><svg x="446" y="291.5" width="62" height="92.5" viewBox="0 0 148 221" preserveAspectRatio="none" overflow="hidden"><defs><linearGradient id="g5" x1="0" y1="0" x2="0" y2="1"><stop offset="0" stop-color="#dde6f0"/><stop offset="0.25" stop-color="#d6dce4"/><stop offset="0.42" stop-color="#d4d7db"/><stop offset="1" stop-color="#d4d7db"/></linearGradient></defs><rect width="148" height="221" fill="url(#g5)"/><g filter="url(#bl0.5)"><path d="M0 46.500 L17.500 47.400 C22 50 26 53 30 56.500 C36 61 42 65 48 69 C54 72 60 73 66 74.500 C72 76 76 78 79 80 L84 92 L0 96Z" fill="#b3b7bb" /><ellipse cx="141.5" cy="84" rx="9" ry="9.5" fill="#b3b7b4" /><rect x="0" y="40" width="148" height="75" fill="url(#fog)" opacity=".8"/><path d="M0 72 C10 66 24 66 32 74 C40 80 50 86 58 92 L40 104 L0 116Z" fill="#a2a69c" /><ellipse cx="18.4" cy="80" rx="12.5" ry="11" fill="#9aa094" /><ellipse cx="8.5" cy="103" rx="13" ry="11" fill="#8f937e" /><ellipse cx="30" cy="97" rx="9" ry="7" fill="#999c8a" /><polygon points="0,110.6 35.5,101.5 40,109 0,126" fill="#96856f" /><polygon points="100,93 148,90 148,121 106,94" fill="#b5b6b7" /><polygon points="108,92 148,88 148,95" fill="#a9a291" /><polygon points="94,93.4 106,93.4 148,119 148,221 81,221 81,135" fill="#a6a7a9" /><polygon points="81,140 148,126 148,221 81,221" fill="#96989b" opacity=".8"/><polygon points="94,93.4 106,93.4 148,119 148,221 81,221 81,135" fill="#4a4d52" filter="url(#gr1)" opacity=".8"/><polygon points="94,93.4 106,93.4 148,119 148,221 81,221 81,135" fill="#dddfe1" filter="url(#gr2)" opacity=".8"/><path d="M90 118 C94 116 96 122 95 130 C96 140 94 150 90 152 C86 146 84 132 90 118Z" fill="#8b8b70" opacity=".8"/><polygon points="0,127.7 39,111.5 94,93.4 91,103 75.2,132.2 75.2,221 0,221" fill="#a0a3a7" /><polygon points="0,138 75.2,133 75.2,221 0,221" fill="#8a8d92" opacity=".7"/><path d="M0 139 L30 129 L32 150 M30 129 L60 116" fill="none" stroke="#7a7d82" stroke-width="0.8" opacity=".7"/><polygon points="94,93.4 96,94 81.5,135 81.5,221 75.2,221 75.2,132.2" fill="#b8b7b1" /><polygon points="97.5,94.3 98.8,94.3 130,149 146,200 136,200 124,149" fill="#86695a" /><polygon points="104,94 105.2,94 148,117.5 148,121.5" fill="#8d7868" /><ellipse cx="71.6" cy="92" rx="2" ry="4.2" fill="#454b57" /><ellipse cx="85.5" cy="91.3" rx="1.6" ry="3.6" fill="#c25560" /><path d="M53.600 79 C62 78 66 84 66 92 C67 100 69 108 70 116 C71 124 73.500 132 72.500 138 L70 139.500 C66 134 64 126 62 118 L46 116 C44 122 40 128 36 130 C33 124 35 116 37 108 C39 100 41 96 41 92 C41 84 45 79.500 53.600 79Z" fill="#30252a" /><path d="M50 102 L61 102 L62 110 C66 111 69 113 71 116 L66 121 L41 121 L38 116 C41 112 46 110.500 49 110Z" fill="#ebd2c9" /><path d="M28.300 116 C30 110 36 108 39 111 L41 119.600 L66 119.600 L69 112 C73 110 76 114 77 120 C78 134 79 150 79 166 L30 166 C27 150 26 130 28.300 116Z" fill="#f1eee9" /><line x1="37.3" y1="110.6" x2="29" y2="150" stroke="#2a282d" stroke-width="1" stroke-linecap="round" /><ellipse cx="55.4" cy="96.1" rx="7.5" ry="10" fill="#eed7d0" /><ellipse cx="51" cy="98" rx="2" ry="1.3" fill="#e8b9b6" opacity=".7"/><ellipse cx="60" cy="98" rx="2" ry="1.3" fill="#e8b9b6" opacity=".7"/><ellipse cx="52.5" cy="94" rx="1.3" ry="0.6" fill="#3a2c2e" /><ellipse cx="58.8" cy="94" rx="1.3" ry="0.6" fill="#3a2c2e" /><ellipse cx="56.5" cy="102" rx="1.9" ry="1" fill="#c22d38" /><path d="M53.600 79 C46 79 41 85 41 93 C41 100 38 108 36.500 116 C35 124 34 128 36 130 C40 126 44 118 46 110 C47.500 102 47 96 47.500 92 C48 88 51 86 55 85 C59 86 62 88 63 92 C63.500 98 64 106 66 114 C68 124 70 132 70.500 139.500 C74 138 73.500 128 72 120 C70 110 68 100 67 92 C67 84 62 79 53.600 79Z" fill="#30252a" /><polygon points="31,160 76,158 81,198 40,200" fill="#8b8f9b" /><polygon points="62,176 100,170 106,221 70,221" fill="#ecd3cb" /><ellipse cx="33" cy="176" rx="5" ry="7" fill="#2a282d" /></g></svg><svg x="542" y="125" width="211" height="315" viewBox="0 0 211 315" preserveAspectRatio="none" overflow="hidden"><defs><linearGradient id="g6" x1="0" y1="0" x2="0" y2="1"><stop offset="0" stop-color="#dce5ef"/><stop offset="0.3" stop-color="#d1d8e1"/><stop offset="0.48" stop-color="#d2d6db"/><stop offset="1" stop-color="#d2d6db"/></linearGradient></defs><rect width="211" height="315" fill="url(#g6)"/><g filter="url(#bl0.7)"><path d="M0 71 C10 73 18 76 26 80 C36 86 42 90 49 93 C58 98 66 101 73 104 C84 110 92 116 101 121 C110 128 116 133 123 138 L138 149 L0 160Z" fill="#b0b4b8" /><path d="M211 113 C200 120 194 125 186 130 C178 136 172 139 167 142 L154 150 L211 158Z" fill="#b9bcbd" /><polygon points="0,196 52,180 74,176 130,152 158,151 188,178 211,194 211,315 0,315" fill="#8f9398" /><polygon points="0,240 211,232 211,315 0,315" fill="#83878c" opacity=".75"/><polygon points="0,196 52,180 74,176 130,152 158,151 188,178 211,194 211,315 0,315" fill="#3c4048" filter="url(#gr1)"/><polygon points="0,196 52,180 74,176 130,152 158,151 188,178 211,194 211,315 0,315" fill="#d4d7db" filter="url(#gr2)"/><ellipse cx="195" cy="196" rx="8" ry="3" fill="#9b917f" /><rect x="0" y="55" width="211" height="170" fill="url(#fog)"/><path d="M0 86 C8 88 14 91 21 95 C30 100 35 103 41 106 C48 110 52 113 56 116 C64 126 70 140 74 178 L52 180 L0 196Z" fill="#989483" /><ellipse cx="25" cy="108" rx="14" ry="12" fill="#8e927e" /><ellipse cx="7" cy="97" rx="8" ry="10" fill="#8f937f" /><ellipse cx="26" cy="160" rx="14" ry="15" fill="#8a8f78" /><ellipse cx="8" cy="141" rx="9" ry="11" fill="#878c74" /><ellipse cx="47" cy="154" rx="10" ry="13" fill="#90947e" /><ellipse cx="14" cy="182" rx="16" ry="8" fill="#968b78" /><polygon points="156,151 211,150 211,194 188,178" fill="#b0a792" /><ellipse cx="199" cy="140" rx="12" ry="13" fill="#a3a99f" /><line x1="203" y1="157" x2="203" y2="179" stroke="#6c5a4c" stroke-width="1.4" stroke-linecap="round" /><line x1="196" y1="156" x2="196" y2="170" stroke="#7c6a5c" stroke-width="1" stroke-linecap="round" /><line x1="189" y1="155" x2="189" y2="166" stroke="#8c7a6c" stroke-width="0.8" stroke-linecap="round" /><polygon points="0,212 49,189.5 51,194 0,220" fill="#70533f" /><polygon points="0,212 49,189.5 49.5,191 0,214.5" fill="#8d7160" /><polygon points="0,227 46,222 46,227.5 0,232.5" fill="#7e6152" /><polygon points="0,247 42,242 42,250 0,255" fill="#7e6152" /><polygon points="0,267 34,262 34,271 0,276" fill="#7e6152" /><rect x="138" y="160" width="18" height="1.5" fill="#7d6a60" opacity="0.45"/><rect x="134" y="167.5" width="26" height="2" fill="#7d6a60" opacity="0.48375"/><rect x="133" y="175" width="29" height="2.5" fill="#7d6a60" opacity="0.5175"/><rect x="131" y="184" width="33" height="3" fill="#7d6a60" opacity="0.558"/><rect x="128" y="195" width="39" height="4" fill="#7d6a60" opacity="0.6075"/><rect x="126" y="208" width="45" height="5" fill="#7d6a60" opacity="0.666"/><rect x="123" y="223" width="51" height="6" fill="#7d6a60" opacity="0.7335"/><rect x="120" y="240" width="59" height="8" fill="#7d6a60" opacity="0.81"/><rect x="118" y="260" width="64" height="10" fill="#7d6a60" opacity="0.9"/><rect x="147" y="284" width="45" height="25" fill="#6e4d41" /><rect x="147" y="284" width="45" height="5" fill="#85655a" /><polygon points="146,157 148,157 150,288 139,288" fill="#7d5b48" /><polygon points="146.5,157 147.5,157 147,288 142,288" fill="#97786a" opacity=".7"/><ellipse cx="138" cy="154" rx="2.2" ry="6" fill="#b45058" /><ellipse cx="145" cy="153" rx="2.2" ry="6" fill="#4a4c58" /><ellipse cx="152" cy="156" rx="1.2" ry="3" fill="#77747c" /><path d="M0 290 L18 285 L70 312 L70 315 L0 315Z" fill="#6a4435" /><rect x="0" y="272" width="12" height="14" fill="#75503f" /><ellipse cx="24.5" cy="279" rx="10" ry="14" fill="#bfbdbc" /><ellipse cx="38" cy="293" rx="7" ry="11" fill="#1f1d22" /><path d="M77 110 C92 108 100 116 103 132 C106 150 112 166 117 182 C122 196 124 206 122 216 C121 222 119 224 117 224 C110 212 104 196 100 184 L64 190 C60 206 54 220 47 232 C43 224 45 210 49 198 C53 184 55 172 56 160 C56 146 58 130 62 122 C66 114 70 111 77 110Z" fill="#241c20" /><path d="M53 177 C58 172 64 170 70 172 L78 194 L106 190 C110 198 111 208 110 219 C112 230 118 244 122 258 L116 268 L104 262 L98 238 L54 228 C51 212 51 192 53 177Z" fill="#f0f0f2" /><path d="M73 150 L95 150 C97 160 100 168 102 175 C104 182 105 186 106 191 L78 194 L69 172 L61 171 C66 166 72 160 73 150Z" fill="#ecd2ca" /><path d="M86 180 C90 184 92 188 91 192" fill="none" stroke="#d9b6ad" stroke-width="1" opacity=".7"/><ellipse cx="84" cy="139.5" rx="12" ry="15.5" fill="#efd8d2" /><ellipse cx="78" cy="142" rx="3" ry="2" fill="#e8b9b6" opacity=".7"/><ellipse cx="91" cy="142" rx="3" ry="2" fill="#e8b9b6" opacity=".7"/><ellipse cx="79.5" cy="136" rx="1.9" ry="0.9" fill="#3a2c2e" /><ellipse cx="89.5" cy="136" rx="1.9" ry="0.9" fill="#3a2c2e" /><ellipse cx="86" cy="147.5" rx="2.8" ry="1.5" fill="#c22d38" /><path d="M77 110 C66 110 60 120 58 134 C56 150 56 168 52 186 C49 202 44 220 47 232 C56 224 62 208 66 190 C70 172 72 156 71 142 C71 132 74 124 84 121 C92 124 97 132 97 142 C98 158 102 174 108 188 C112 200 116 214 117 224 C124 220 124 204 120 190 C114 172 108 156 104 138 C102 122 94 108 77 110Z" fill="#241c20" /><path d="M53 177 C57 172 64 171 69 174 L78 196 L96 232 L114 268 C118 274 118 280 114 286 L104 287 C96 278 90 272 84 264 L56 230 C51 214 50 194 53 177Z" fill="#f4f4f6" /><path d="M70 178 L96 236 L112 270" fill="none" stroke="#dcdce2" stroke-width="1.2" opacity=".8"/><path d="M110 212 C116 224 120 240 124 258 C124 266 120 270 116 268 L106 244Z" fill="#f0f0f2" /><path d="M49 230 C56 236 64 238 67 238 L90 264 L101 290 C92 300 84 304 75 307 C62 306 50 304 43 301 C36 296 32 290 32 286 C32 276 34 266 34 260 C38 250 44 238 49 230Z" fill="#2b2f3f" /><path d="M50 244 L94 298 M38 266 L78 305 M42 292 L92 262 M58 306 L100 280 M36 278 L60 236" fill="none" stroke="#9095a3" stroke-width="1.2" opacity=".65"/><path d="M101 290 C106 282 110 274 116 270 C126 272 136 280 142 286 C146 292 148 300 146 315 L75 315 L75 307 C84 304 92 300 101 290Z" fill="#efd6ce" /><ellipse cx="119" cy="270" rx="8" ry="5" fill="#eaccc3" /><ellipse cx="113" cy="295" rx="10" ry="7" fill="#e8c8bf" /></g></svg><svg x="811" y="103" width="235" height="351.5" viewBox="0 0 235 351" preserveAspectRatio="none" overflow="hidden"><defs><linearGradient id="g7" x1="0" y1="0" x2="0" y2="1"><stop offset="0" stop-color="#dfe9f2"/><stop offset="0.2" stop-color="#d6dfe9"/><stop offset="0.4" stop-color="#d6dbe1"/><stop offset="1" stop-color="#d6dbe1"/></linearGradient></defs><rect width="235" height="351" fill="url(#g7)"/><g filter="url(#bl0.7)"><path d="M235 80 C215 86 200 92 180 104 C160 116 140 124 118 132 L96 142 L235 150Z" fill="#b9bab8" /><path d="M0 116 C10 118 22 124 34 134 C44 142 54 146 64 149 L0 154Z" fill="#b1b6b8" /><polygon points="0,158 60,149 125,147 235,164 235,351 0,351" fill="#9196a0" /><path d="M0 200 L235 190 L235 351 L0 351Z" fill="#828892" opacity=".8"/><polygon points="132,148 235,156 235,178 150,157" fill="#a89f8b" /><polygon points="0,158 60,149 125,147 235,164 235,351 0,351" fill="#3c4048" filter="url(#gr1)"/><polygon points="0,158 60,149 125,147 235,164 235,351 0,351" fill="#d4d7db" filter="url(#gr2)"/><rect x="0" y="70" width="235" height="130" fill="url(#fog)"/><path d="M235 96 C218 101 200 111 184 121 C170 129 158 135 140 143 L235 160Z" fill="#aaa79c" filter="url(#bl2)"/><ellipse cx="216" cy="100" rx="20" ry="10" fill="#a6ab9f" filter="url(#bl2)"/><ellipse cx="207" cy="140" rx="20" ry="8" fill="#9ea38f" filter="url(#bl2)"/><ellipse cx="180" cy="144" rx="13" ry="6" fill="#a2a692" filter="url(#bl2)"/><polygon points="132,148 235,154 235,176 150,157" fill="#aaa18e" /><polygon points="0,153 40,148 56,150 0,172" fill="#bcbdbe" /><path d="M0 166 L44 153 L52 156 C44 170 38 180 34 192 C28 208 20 224 12 236 L0 252Z" fill="#8f8573" /><ellipse cx="28" cy="186" rx="8" ry="5" fill="#7f8c62" /><ellipse cx="12" cy="218" rx="8" ry="5" fill="#86936a" /><ellipse cx="30" cy="160" rx="8" ry="3" fill="#9a9d86" /><rect x="7" y="149" width="8" height="56" fill="#7b6f60" /><line x1="132" y1="152" x2="236" y2="186" stroke="#8e7b6e" stroke-width="2.2" stroke-linecap="round" /><line x1="136" y1="159" x2="236" y2="197" stroke="#7c6456" stroke-width="3.6" stroke-linecap="round" /><polygon points="196,190 235,201 235,208 206,199" fill="#705649" /><rect x="66" y="158" width="8" height="3" fill="#7e6a5f" /><rect x="64" y="165" width="10" height="4" fill="#7e6a5f" /><rect x="62" y="173" width="11" height="5" fill="#7e6a5f" /><rect x="61" y="182" width="11" height="5.5" fill="#7e6a5f" /><rect x="58" y="192" width="14" height="7" fill="#7e6a5f" /><rect x="55" y="203" width="17" height="7" fill="#7e6a5f" /><rect x="52" y="214" width="20" height="8" fill="#7e6a5f" /><rect x="49.5" y="225" width="22.5" height="8.5" fill="#7e6a5f" /><rect x="45" y="238" width="29" height="12" fill="#7e6a5f" /><rect x="37" y="258" width="48" height="22" fill="#6f564c" /><rect x="37" y="258" width="48" height="5" fill="#84695d" /><rect x="27" y="289" width="60" height="40" fill="#6b5249" /><rect x="27" y="289" width="60" height="6" fill="#82675b" /><rect x="172" y="268" width="64" height="33" fill="#775a4e" /><rect x="172" y="268" width="64" height="6" fill="#8a6e61" /><rect x="167" y="241" width="13" height="17" fill="#735549" /><line x1="76" y1="149" x2="86" y2="176" stroke="#8c786c" stroke-width="2" stroke-linecap="round" /><polygon points="86,152 90,152 168,262 236,344 236,351 184,351 141,270" fill="#6a4a3c" /><polygon points="146,250 156,248 236,344 236,351 222,351" fill="#80604f" /><polygon points="150,330 236,330 236,351 150,351" fill="#6b4a3d" opacity=".85"/><ellipse cx="50" cy="153" rx="2.2" ry="5.5" fill="#5c5863" /><ellipse cx="56.5" cy="152" rx="2.2" ry="5.5" fill="#a8535e" /><ellipse cx="63" cy="151" rx="2.2" ry="5.5" fill="#525866" /><ellipse cx="76" cy="152" rx="1.6" ry="4.5" fill="#c9a3ab" /><path d="M111 125 C130 125 139 142 137 162 C139 180 146 196 149 212 C151 222 152 228 148 231 C138 228 128 216 126 200 L96 200 C94 216 84 226 72 230 C68 224 72 210 75 196 C80 180 86 166 86 154 C85 138 94 125 111 125Z" fill="#2a2124" /><path d="M72 182 C82 176 96 174 111 176 C126 174 142 176 152 182 C160 196 166 224 170 244 C174 258 178 270 180 280 L166 288 C160 276 150 258 142 244 L139 248 C132 256 120 262 111 266 C102 262 92 260 86 258 L84 272 L70 270 C66 250 64 220 66 204 C67 194 69 187 72 182Z" fill="#f0ebe1" /><path d="M112 206 L113 262" fill="none" stroke="#ded8cc" stroke-width="1"/><path d="M102 166 L120 166 L122 180 C120 194 114 204 111 208 C108 204 102 194 100 180Z" fill="#ebd0c8" /><ellipse cx="111" cy="157" rx="11.5" ry="15" fill="#edd5ce" /><ellipse cx="105.5" cy="158" rx="3" ry="2" fill="#e7bcb8" opacity=".7"/><ellipse cx="117" cy="158" rx="3" ry="2" fill="#e7bcb8" opacity=".7"/><ellipse cx="106.5" cy="153" rx="1.8" ry="0.9" fill="#3a2c2e" /><ellipse cx="116" cy="153" rx="1.8" ry="0.9" fill="#3a2c2e" /><ellipse cx="111" cy="165" rx="2.6" ry="1.5" fill="#c4303a" /><path d="M111 125 C96 125 87 138 89 156 C89 172 82 190 77 204 C73 216 69 224 72 230 C83 228 94 216 98 198 C102 184 101 170 99 158 C100 148 104 141 112 137 C119 141 123 148 124 158 C122 170 123 186 128 200 C132 216 140 228 148 231 C152 222 147 208 143 194 C137 180 133 168 134 154 C135 138 126 125 111 125Z" fill="#2a2124" /><path d="M84 260 C100 266 124 262 140 246 C150 262 158 282 164 300 C150 310 132 306 118 294 C104 290 84 288 62 282 C66 272 74 264 84 260Z" fill="#9497a6" /><path d="M100 268 L152 262 L160 298 L140 304Z" fill="#a9adba" opacity=".55"/><path d="M90 264 L120 292 M110 266 L150 300 M70 280 L150 270" fill="none" stroke="#5f6579" stroke-width="1.5" opacity=".6"/><path d="M70 284 C84 288 104 290 118 294 C132 304 146 304 150 306 C150 322 146 340 144 351 L62 351 C62 330 64 300 70 284Z" fill="#eed7d1" /><path d="M106 351 C104 330 106 312 114 300" fill="none" stroke="#d9b9b1" stroke-width="2" opacity=".8"/><ellipse cx="82" cy="274" rx="9" ry="6" fill="#eacdc5" /><ellipse cx="176" cy="285" rx="6" ry="5" fill="#e9cbc3" /><ellipse cx="72" cy="262" rx="5" ry="9" fill="#26242a" /></g></svg><rect x="764.5" y="127" width="2" height="2" fill="#ddd"/><rect x="764" y="435" width="2.500" height="2" fill="#ddd"/></svg><!--/CANVAS-->


<!-- floating canvas buttons -->
<div class="abs" style="left:886px;top:92px;width:64px;height:37px;background:rgba(58,58,58,.82);border-radius:7px">
<svg class="abs" style="left:12px;top:8px" width="23" height="20" viewBox="0 0 23 20"><path d="M1.300 16.700V3.200a1.800 1.800 0 0 1 1.800-1.800h5.100l2.800 2.800h9a1.800 1.800 0 0 1 1.800 1.800v10.700a1.800 1.800 0 0 1-1.800 1.800H3.100a1.800 1.800 0 0 1-1.800-1.800z" fill="none" stroke="#fff" stroke-width="2" stroke-linejoin="round"/></svg>
<svg class="abs" style="left:43px;top:14px" width="10" height="9" viewBox="0 0 10 9"><path d="M0 0h10L5 9z" fill="#fff"/></svg>
</div>
<div class="abs" style="left:960px;top:92px;width:71px;height:37px;background:#444556;border-radius:7px"><span class="abs" style="left:5.5px;top:9.5px;font-size:17.5px;line-height:22px;font-weight:bold;color:#fff;letter-spacing:0">Models</span></div>
<div class="abs" style="left:1042px;top:92px;width:41px;height:37px;background:transparent;border:1px solid #5dc8ba;border-radius:8px">
<svg class="abs" style="left:11px;top:9px" width="17" height="17" viewBox="0 0 17 17"><g fill="none" stroke="#fff" stroke-width="1.800" stroke-linejoin="round"><path d="M1.200 3.200a2 2 0 0 1 2-2h8.300l4.300 4.300v8.300a2 2 0 0 1-2 2H3.200a2 2 0 0 1-2-2z"/><path d="M4.800 1.500v3.800h5.600V1.500"/><circle cx="8.500" cy="10.800" r="1.700"/></g></svg>
</div>
<!-- feed -->
<div id="feed" class="abs"></div>
<!--FEED--><svg class="abs" style="left:9px;top:667px" width="1731" height="155" viewBox="0 0 1731 155" overflow="hidden"><defs><clipPath id="tc"><rect x="0" y="0" width="148" height="160" rx="5"/></clipPath></defs><g transform="translate(167,6)" clip-path="url(#tc)"><svg x="0" y="0" width="148" height="149" viewBox="0 0 148 149" preserveAspectRatio="none" overflow="hidden"><defs><linearGradient id="g8" x1="0" y1="0" x2="0" y2="1"><stop offset="0" stop-color="#dde6f0"/><stop offset="0.25" stop-color="#d6dce4"/><stop offset="0.42" stop-color="#d4d7db"/><stop offset="1" stop-color="#d4d7db"/></linearGradient></defs><rect width="148" height="149" fill="url(#g8)"/><g filter="url(#bl0.5)"><path d="M0 46.500 L17.500 47.400 C22 50 26 53 30 56.500 C36 61 42 65 48 69 C54 72 60 73 66 74.500 C72 76 76 78 79 80 L84 92 L0 96Z" fill="#b3b7bb" /><ellipse cx="141.5" cy="84" rx="9" ry="9.5" fill="#b3b7b4" /><rect x="0" y="40" width="148" height="75" fill="url(#fog)" opacity=".8"/><path d="M0 72 C10 66 24 66 32 74 C40 80 50 86 58 92 L40 104 L0 116Z" fill="#a2a69c" /><ellipse cx="18.4" cy="80" rx="12.5" ry="11" fill="#9aa094" /><ellipse cx="8.5" cy="103" rx="13" ry="11" fill="#8f937e" /><ellipse cx="30" cy="97" rx="9" ry="7" fill="#999c8a" /><polygon points="0,110.6 35.5,101.5 40,109 0,126" fill="#96856f" /><polygon points="100,93 148,90 148,121 106,94" fill="#b5b6b7" /><polygon points="108,92 148,88 148,95" fill="#a9a291" /><polygon points="94,93.4 106,93.4 148,119 148,221 81,221 81,135" fill="#a6a7a9" /><polygon points="81,140 148,126 148,221 81,221" fill="#96989b" opacity=".8"/><polygon points="94,93.4 106,93.4 148,119 148,221 81,221 81,135" fill="#4a4d52" filter="url(#gr1)" opacity=".8"/><polygon points="94,93.4 106,93.4 148,119 148,221 81,221 81,135" fill="#dddfe1" filter="url(#gr2)" opacity=".8"/><path d="M90 118 C94 116 96 122 95 130 C96 140 94 150 90 152 C86 146 84 132 90 118Z" fill="#8b8b70" opacity=".8"/><polygon points="0,127.7 39,111.5 94,93.4 91,103 75.2,132.2 75.2,221 0,221" fill="#a0a3a7" /><polygon points="0,138 75.2,133 75.2,221 0,221" fill="#8a8d92" opacity=".7"/><path d="M0 139 L30 129 L32 150 M30 129 L60 116" fill="none" stroke="#7a7d82" stroke-width="0.8" opacity=".7"/><polygon points="94,93.4 96,94 81.5,135 81.5,221 75.2,221 75.2,132.2" fill="#b8b7b1" /><polygon points="97.5,94.3 98.8,94.3 130,149 146,200 136,200 124,149" fill="#86695a" /><polygon points="104,94 105.2,94 148,117.5 148,121.5" fill="#8d7868" /><ellipse cx="71.6" cy="92" rx="2" ry="4.2" fill="#454b57" /><ellipse cx="85.5" cy="91.3" rx="1.6" ry="3.6" fill="#c25560" /><path d="M53.600 79 C62 78 66 84 66 92 C67 100 69 108 70 116 C71 124 73.500 132 72.500 138 L70 139.500 C66 134 64 126 62 118 L46 116 C44 122 40 128 36 130 C33 124 35 116 37 108 C39 100 41 96 41 92 C41 84 45 79.500 53.600 79Z" fill="#30252a" /><path d="M50 102 L61 102 L62 110 C66 111 69 113 71 116 L66 121 L41 121 L38 116 C41 112 46 110.500 49 110Z" fill="#ebd2c9" /><path d="M28.300 116 C30 110 36 108 39 111 L41 119.600 L66 119.600 L69 112 C73 110 76 114 77 120 C78 134 79 150 79 166 L30 166 C27 150 26 130 28.300 116Z" fill="#f1eee9" /><line x1="37.3" y1="110.6" x2="29" y2="150" stroke="#2a282d" stroke-width="1" stroke-linecap="round" /><ellipse cx="55.4" cy="96.1" rx="7.5" ry="10" fill="#eed7d0" /><ellipse cx="51" cy="98" rx="2" ry="1.3" fill="#e8b9b6" opacity=".7"/><ellipse cx="60" cy="98" rx="2" ry="1.3" fill="#e8b9b6" opacity=".7"/><ellipse cx="52.5" cy="94" rx="1.3" ry="0.6" fill="#3a2c2e" /><ellipse cx="58.8" cy="94" rx="1.3" ry="0.6" fill="#3a2c2e" /><ellipse cx="56.5" cy="102" rx="1.9" ry="1" fill="#c22d38" /><path d="M53.600 79 C46 79 41 85 41 93 C41 100 38 108 36.500 116 C35 124 34 128 36 130 C40 126 44 118 46 110 C47.500 102 47 96 47.500 92 C48 88 51 86 55 85 C59 86 62 88 63 92 C63.500 98 64 106 66 114 C68 124 70 132 70.500 139.500 C74 138 73.500 128 72 120 C70 110 68 100 67 92 C67 84 62 79 53.600 79Z" fill="#30252a" /><polygon points="31,160 76,158 81,198 40,200" fill="#8b8f9b" /><polygon points="62,176 100,170 106,221 70,221" fill="#ecd3cb" /><ellipse cx="33" cy="176" rx="5" ry="7" fill="#2a282d" /></g></svg></g><g transform="translate(638,6)" clip-path="url(#tc)"><svg x="0" y="0" width="148" height="149" viewBox="0 0 211 212.4" preserveAspectRatio="none" overflow="hidden"><svg x="0" y="0" width="211" height="315" viewBox="0 0 211 315" preserveAspectRatio="none" overflow="hidden"><defs><linearGradient id="g9" x1="0" y1="0" x2="0" y2="1"><stop offset="0" stop-color="#dce5ef"/><stop offset="0.3" stop-color="#d1d8e1"/><stop offset="0.48" stop-color="#d2d6db"/><stop offset="1" stop-color="#d2d6db"/></linearGradient></defs><rect width="211" height="315" fill="url(#g9)"/><g filter="url(#bl0.7)"><path d="M0 71 C10 73 18 76 26 80 C36 86 42 90 49 93 C58 98 66 101 73 104 C84 110 92 116 101 121 C110 128 116 133 123 138 L138 149 L0 160Z" fill="#b0b4b8" /><path d="M211 113 C200 120 194 125 186 130 C178 136 172 139 167 142 L154 150 L211 158Z" fill="#b9bcbd" /><polygon points="0,196 52,180 74,176 130,152 158,151 188,178 211,194 211,315 0,315" fill="#8f9398" /><polygon points="0,240 211,232 211,315 0,315" fill="#83878c" opacity=".75"/><polygon points="0,196 52,180 74,176 130,152 158,151 188,178 211,194 211,315 0,315" fill="#3c4048" filter="url(#gr1)"/><polygon points="0,196 52,180 74,176 130,152 158,151 188,178 211,194 211,315 0,315" fill="#d4d7db" filter="url(#gr2)"/><ellipse cx="195" cy="196" rx="8" ry="3" fill="#9b917f" /><rect x="0" y="55" width="211" height="170" fill="url(#fog)"/><path d="M0 86 C8 88 14 91 21 95 C30 100 35 103 41 106 C48 110 52 113 56 116 C64 126 70 140 74 178 L52 180 L0 196Z" fill="#989483" /><ellipse cx="25" cy="108" rx="14" ry="12" fill="#8e927e" /><ellipse cx="7" cy="97" rx="8" ry="10" fill="#8f937f" /><ellipse cx="26" cy="160" rx="14" ry="15" fill="#8a8f78" /><ellipse cx="8" cy="141" rx="9" ry="11" fill="#878c74" /><ellipse cx="47" cy="154" rx="10" ry="13" fill="#90947e" /><ellipse cx="14" cy="182" rx="16" ry="8" fill="#968b78" /><polygon points="156,151 211,150 211,194 188,178" fill="#b0a792" /><ellipse cx="199" cy="140" rx="12" ry="13" fill="#a3a99f" /><line x1="203" y1="157" x2="203" y2="179" stroke="#6c5a4c" stroke-width="1.4" stroke-linecap="round" /><line x1="196" y1="156" x2="196" y2="170" stroke="#7c6a5c" stroke-width="1" stroke-linecap="round" /><line x1="189" y1="155" x2="189" y2="166" stroke="#8c7a6c" stroke-width="0.8" stroke-linecap="round" /><polygon points="0,212 49,189.5 51,194 0,220" fill="#70533f" /><polygon points="0,212 49,189.5 49.5,191 0,214.5" fill="#8d7160" /><polygon points="0,227 46,222 46,227.5 0,232.5" fill="#7e6152" /><polygon points="0,247 42,242 42,250 0,255" fill="#7e6152" /><polygon points="0,267 34,262 34,271 0,276" fill="#7e6152" /><rect x="138" y="160" width="18" height="1.5" fill="#7d6a60" opacity="0.45"/><rect x="134" y="167.5" width="26" height="2" fill="#7d6a60" opacity="0.48375"/><rect x="133" y="175" width="29" height="2.5" fill="#7d6a60" opacity="0.5175"/><rect x="131" y="184" width="33" height="3" fill="#7d6a60" opacity="0.558"/><rect x="128" y="195" width="39" height="4" fill="#7d6a60" opacity="0.6075"/><rect x="126" y="208" width="45" height="5" fill="#7d6a60" opacity="0.666"/><rect x="123" y="223" width="51" height="6" fill="#7d6a60" opacity="0.7335"/><rect x="120" y="240" width="59" height="8" fill="#7d6a60" opacity="0.81"/><rect x="118" y="260" width="64" height="10" fill="#7d6a60" opacity="0.9"/><rect x="147" y="284" width="45" height="25" fill="#6e4d41" /><rect x="147" y="284" width="45" height="5" fill="#85655a" /><polygon points="146,157 148,157 150,288 139,288" fill="#7d5b48" /><polygon points="146.5,157 147.5,157 147,288 142,288" fill="#97786a" opacity=".7"/><ellipse cx="138" cy="154" rx="2.2" ry="6" fill="#b45058" /><ellipse cx="145" cy="153" rx="2.2" ry="6" fill="#4a4c58" /><ellipse cx="152" cy="156" rx="1.2" ry="3" fill="#77747c" /><path d="M0 290 L18 285 L70 312 L70 315 L0 315Z" fill="#6a4435" /><rect x="0" y="272" width="12" height="14" fill="#75503f" /><ellipse cx="24.5" cy="279" rx="10" ry="14" fill="#bfbdbc" /><ellipse cx="38" cy="293" rx="7" ry="11" fill="#1f1d22" /><path d="M77 110 C92 108 100 116 103 132 C106 150 112 166 117 182 C122 196 124 206 122 216 C121 222 119 224 117 224 C110 212 104 196 100 184 L64 190 C60 206 54 220 47 232 C43 224 45 210 49 198 C53 184 55 172 56 160 C56 146 58 130 62 122 C66 114 70 111 77 110Z" fill="#241c20" /><path d="M53 177 C58 172 64 170 70 172 L78 194 L106 190 C110 198 111 208 110 219 C112 230 118 244 122 258 L116 268 L104 262 L98 238 L54 228 C51 212 51 192 53 177Z" fill="#f0f0f2" /><path d="M73 150 L95 150 C97 160 100 168 102 175 C104 182 105 186 106 191 L78 194 L69 172 L61 171 C66 166 72 160 73 150Z" fill="#ecd2ca" /><path d="M86 180 C90 184 92 188 91 192" fill="none" stroke="#d9b6ad" stroke-width="1" opacity=".7"/><ellipse cx="84" cy="139.5" rx="12" ry="15.5" fill="#efd8d2" /><ellipse cx="78" cy="142" rx="3" ry="2" fill="#e8b9b6" opacity=".7"/><ellipse cx="91" cy="142" rx="3" ry="2" fill="#e8b9b6" opacity=".7"/><ellipse cx="79.5" cy="136" rx="1.9" ry="0.9" fill="#3a2c2e" /><ellipse cx="89.5" cy="136" rx="1.9" ry="0.9" fill="#3a2c2e" /><ellipse cx="86" cy="147.5" rx="2.8" ry="1.5" fill="#c22d38" /><path d="M77 110 C66 110 60 120 58 134 C56 150 56 168 52 186 C49 202 44 220 47 232 C56 224 62 208 66 190 C70 172 72 156 71 142 C71 132 74 124 84 121 C92 124 97 132 97 142 C98 158 102 174 108 188 C112 200 116 214 117 224 C124 220 124 204 120 190 C114 172 108 156 104 138 C102 122 94 108 77 110Z" fill="#241c20" /><path d="M53 177 C57 172 64 171 69 174 L78 196 L96 232 L114 268 C118 274 118 280 114 286 L104 287 C96 278 90 272 84 264 L56 230 C51 214 50 194 53 177Z" fill="#f4f4f6" /><path d="M70 178 L96 236 L112 270" fill="none" stroke="#dcdce2" stroke-width="1.2" opacity=".8"/><path d="M110 212 C116 224 120 240 124 258 C124 266 120 270 116 268 L106 244Z" fill="#f0f0f2" /><path d="M49 230 C56 236 64 238 67 238 L90 264 L101 290 C92 300 84 304 75 307 C62 306 50 304 43 301 C36 296 32 290 32 286 C32 276 34 266 34 260 C38 250 44 238 49 230Z" fill="#2b2f3f" /><path d="M50 244 L94 298 M38 266 L78 305 M42 292 L92 262 M58 306 L100 280 M36 278 L60 236" fill="none" stroke="#9095a3" stroke-width="1.2" opacity=".65"/><path d="M101 290 C106 282 110 274 116 270 C126 272 136 280 142 286 C146 292 148 300 146 315 L75 315 L75 307 C84 304 92 300 101 290Z" fill="#efd6ce" /><ellipse cx="119" cy="270" rx="8" ry="5" fill="#eaccc3" /><ellipse cx="113" cy="295" rx="10" ry="7" fill="#e8c8bf" /></g></svg></svg></g><g transform="translate(1110,6)" clip-path="url(#tc)"><svg x="0" y="0" width="148" height="149" viewBox="0 0 148 149" preserveAspectRatio="none" overflow="hidden"><defs><linearGradient id="g10" x1="0" y1="0" x2="0" y2="1"><stop offset="0" stop-color="#d6dbe1"/><stop offset="0.3" stop-color="#d8dbdf"/><stop offset="0.5" stop-color="#d7d8da"/><stop offset="1" stop-color="#d7d8da"/></linearGradient></defs><rect width="148" height="149" fill="url(#g10)"/><g filter="url(#bl0.5)"><path d="M0 32 C8 28 18 30 22 38 C28 44 28 54 27 68 L0 68Z" fill="#a7aca8" /><ellipse cx="10" cy="50" rx="16" ry="18" fill="#a5aaa6" /><path d="M26 54 C32 48 42 50 48 58 L52 68 L26 68Z" fill="#b6b9b8" /><polygon points="148,14 130,28 110,44 90,58 79,67 148,70" fill="#b8b9b5" /><polygon points="148,24 135,34 118,50 100,62 90,68 148,72" fill="#a5a291" /><polygon points="0,67 48,67 48,74 0,84" fill="#b2aa9a" /><polygon points="0,83.5 48,72.7 48,78 0,92.5" fill="#bdbcb9" /><polygon points="80,66 148,64 148,94 120,82 90,72" fill="#9c9479" /><polygon points="0,92 48,77 80,70 100,74 148,92 148,149 0,149" fill="#8b8e92" /><polygon points="0,92 48,77 80,70 100,74 148,92 148,149 0,149" fill="#3c4048" filter="url(#gr1)"/><polygon points="0,92 48,77 80,70 100,74 148,92 148,149 0,149" fill="#d4d7db" filter="url(#gr2)"/><polygon points="0,92 46,78 50,84 0,112" fill="#8b8566" /><ellipse cx="10" cy="100" rx="6" ry="3" fill="#7f8d5c" /><ellipse cx="24" cy="92" rx="5" ry="2.5" fill="#84925f" /><ellipse cx="115" cy="96" rx="5" ry="3.5" fill="#8a9668" /><rect x="0" y="35" width="148" height="62" fill="url(#fog)" opacity=".7"/><rect x="27" y="103" width="79.06" height="5" fill="#857a70" /><rect x="18.5" y="111.5" width="92.49" height="5" fill="#857a70" /><rect x="10.4" y="119.6" width="105.288" height="6" fill="#857a70" /><rect x="0.5" y="129.5" width="120.93" height="8" fill="#857a70" /><rect x="-12" y="142" width="140.68" height="8" fill="#857a70" /><polygon points="47,92 50.5,92 10,149 0,149 0,135" fill="#7d5e4c" /><polygon points="87,96 90,96 125,149 112,149" fill="#7a5a49" /><ellipse cx="3.4" cy="74" rx="2" ry="6" fill="#4d5058" /><ellipse cx="35.5" cy="75" rx="1.8" ry="4.5" fill="#9c4a55" /><ellipse cx="46" cy="73" rx="1.5" ry="4" fill="#6a6f7a" /><ellipse cx="63.5" cy="86" rx="15.5" ry="33" fill="#2c2226" /><ellipse cx="56" cy="102" rx="9" ry="28" fill="#2c2226" /><polygon points="50,96 60,88 88,88 96,98 101,149 44,149 50,120" fill="#eceef3" /><polygon points="64,80 76,80 82,90 78,98 66,98 62,90" fill="#ecd3cb" /><ellipse cx="67" cy="75" rx="8" ry="10.5" fill="#eed7d0" /><ellipse cx="64" cy="60" rx="12" ry="7" fill="#2c2226" /><ellipse cx="54" cy="96" rx="7" ry="30" fill="#2c2226" /><ellipse cx="77" cy="72" rx="3" ry="12" fill="#2c2226" /><ellipse cx="66" cy="80.5" rx="2" ry="1.1" fill="#c22d38" /><ellipse cx="63.5" cy="73" rx="1.4" ry="0.7" fill="#3a2c2e" /><ellipse cx="70.5" cy="73" rx="1.4" ry="0.7" fill="#3a2c2e" /><polygon points="56,130 95,128 98,149 52,149" fill="#3d3f4a" /><polygon points="48,112 60,120 74,149 48,149" fill="#eceef3" /><polygon points="84,120 96,110 100,149 84,149" fill="#eceef3" /><ellipse cx="45.5" cy="141" rx="4" ry="6" fill="#e6d9c2" /></g></svg></g><g transform="translate(1581,6)" clip-path="url(#tc)"><svg x="0" y="0" width="148" height="149" viewBox="0 0 235 236.6" preserveAspectRatio="none" overflow="hidden"><svg x="0" y="0" width="235" height="351" viewBox="0 0 235 351" preserveAspectRatio="none" overflow="hidden"><defs><linearGradient id="g11" x1="0" y1="0" x2="0" y2="1"><stop offset="0" stop-color="#dfe9f2"/><stop offset="0.2" stop-color="#d6dfe9"/><stop offset="0.4" stop-color="#d6dbe1"/><stop offset="1" stop-color="#d6dbe1"/></linearGradient></defs><rect width="235" height="351" fill="url(#g11)"/><g filter="url(#bl0.7)"><path d="M235 80 C215 86 200 92 180 104 C160 116 140 124 118 132 L96 142 L235 150Z" fill="#b9bab8" /><path d="M0 116 C10 118 22 124 34 134 C44 142 54 146 64 149 L0 154Z" fill="#b1b6b8" /><polygon points="0,158 60,149 125,147 235,164 235,351 0,351" fill="#9196a0" /><path d="M0 200 L235 190 L235 351 L0 351Z" fill="#828892" opacity=".8"/><polygon points="132,148 235,156 235,178 150,157" fill="#a89f8b" /><polygon points="0,158 60,149 125,147 235,164 235,351 0,351" fill="#3c4048" filter="url(#gr1)"/><polygon points="0,158 60,149 125,147 235,164 235,351 0,351" fill="#d4d7db" filter="url(#gr2)"/><rect x="0" y="70" width="235" height="130" fill="url(#fog)"/><path d="M235 96 C218 101 200 111 184 121 C170 129 158 135 140 143 L235 160Z" fill="#aaa79c" filter="url(#bl2)"/><ellipse cx="216" cy="100" rx="20" ry="10" fill="#a6ab9f" filter="url(#bl2)"/><ellipse cx="207" cy="140" rx="20" ry="8" fill="#9ea38f" filter="url(#bl2)"/><ellipse cx="180" cy="144" rx="13" ry="6" fill="#a2a692" filter="url(#bl2)"/><polygon points="132,148 235,154 235,176 150,157" fill="#aaa18e" /><polygon points="0,153 40,148 56,150 0,172" fill="#bcbdbe" /><path d="M0 166 L44 153 L52 156 C44 170 38 180 34 192 C28 208 20 224 12 236 L0 252Z" fill="#8f8573" /><ellipse cx="28" cy="186" rx="8" ry="5" fill="#7f8c62" /><ellipse cx="12" cy="218" rx="8" ry="5" fill="#86936a" /><ellipse cx="30" cy="160" rx="8" ry="3" fill="#9a9d86" /><rect x="7" y="149" width="8" height="56" fill="#7b6f60" /><line x1="132" y1="152" x2="236" y2="186" stroke="#8e7b6e" stroke-width="2.2" stroke-linecap="round" /><line x1="136" y1="159" x2="236" y2="197" stroke="#7c6456" stroke-width="3.6" stroke-linecap="round" /><polygon points="196,190 235,201 235,208 206,199" fill="#705649" /><rect x="66" y="158" width="8" height="3" fill="#7e6a5f" /><rect x="64" y="165" width="10" height="4" fill="#7e6a5f" /><rect x="62" y="173" width="11" height="5" fill="#7e6a5f" /><rect x="61" y="182" width="11" height="5.5" fill="#7e6a5f" /><rect x="58" y="192" width="14" height="7" fill="#7e6a5f" /><rect x="55" y="203" width="17" height="7" fill="#7e6a5f" /><rect x="52" y="214" width="20" height="8" fill="#7e6a5f" /><rect x="49.5" y="225" width="22.5" height="8.5" fill="#7e6a5f" /><rect x="45" y="238" width="29" height="12" fill="#7e6a5f" /><rect x="37" y="258" width="48" height="22" fill="#6f564c" /><rect x="37" y="258" width="48" height="5" fill="#84695d" /><rect x="27" y="289" width="60" height="40" fill="#6b5249" /><rect x="27" y="289" width="60" height="6" fill="#82675b" /><rect x="172" y="268" width="64" height="33" fill="#775a4e" /><rect x="172" y="268" width="64" height="6" fill="#8a6e61" /><rect x="167" y="241" width="13" height="17" fill="#735549" /><line x1="76" y1="149" x2="86" y2="176" stroke="#8c786c" stroke-width="2" stroke-linecap="round" /><polygon points="86,152 90,152 168,262 236,344 236,351 184,351 141,270" fill="#6a4a3c" /><polygon points="146,250 156,248 236,344 236,351 222,351" fill="#80604f" /><polygon points="150,330 236,330 236,351 150,351" fill="#6b4a3d" opacity=".85"/><ellipse cx="50" cy="153" rx="2.2" ry="5.5" fill="#5c5863" /><ellipse cx="56.5" cy="152" rx="2.2" ry="5.5" fill="#a8535e" /><ellipse cx="63" cy="151" rx="2.2" ry="5.5" fill="#525866" /><ellipse cx="76" cy="152" rx="1.6" ry="4.5" fill="#c9a3ab" /><path d="M111 125 C130 125 139 142 137 162 C139 180 146 196 149 212 C151 222 152 228 148 231 C138 228 128 216 126 200 L96 200 C94 216 84 226 72 230 C68 224 72 210 75 196 C80 180 86 166 86 154 C85 138 94 125 111 125Z" fill="#2a2124" /><path d="M72 182 C82 176 96 174 111 176 C126 174 142 176 152 182 C160 196 166 224 170 244 C174 258 178 270 180 280 L166 288 C160 276 150 258 142 244 L139 248 C132 256 120 262 111 266 C102 262 92 260 86 258 L84 272 L70 270 C66 250 64 220 66 204 C67 194 69 187 72 182Z" fill="#f0ebe1" /><path d="M112 206 L113 262" fill="none" stroke="#ded8cc" stroke-width="1"/><path d="M102 166 L120 166 L122 180 C120 194 114 204 111 208 C108 204 102 194 100 180Z" fill="#ebd0c8" /><ellipse cx="111" cy="157" rx="11.5" ry="15" fill="#edd5ce" /><ellipse cx="105.5" cy="158" rx="3" ry="2" fill="#e7bcb8" opacity=".7"/><ellipse cx="117" cy="158" rx="3" ry="2" fill="#e7bcb8" opacity=".7"/><ellipse cx="106.5" cy="153" rx="1.8" ry="0.9" fill="#3a2c2e" /><ellipse cx="116" cy="153" rx="1.8" ry="0.9" fill="#3a2c2e" /><ellipse cx="111" cy="165" rx="2.6" ry="1.5" fill="#c4303a" /><path d="M111 125 C96 125 87 138 89 156 C89 172 82 190 77 204 C73 216 69 224 72 230 C83 228 94 216 98 198 C102 184 101 170 99 158 C100 148 104 141 112 137 C119 141 123 148 124 158 C122 170 123 186 128 200 C132 216 140 228 148 231 C152 222 147 208 143 194 C137 180 133 168 134 154 C135 138 126 125 111 125Z" fill="#2a2124" /><path d="M84 260 C100 266 124 262 140 246 C150 262 158 282 164 300 C150 310 132 306 118 294 C104 290 84 288 62 282 C66 272 74 264 84 260Z" fill="#9497a6" /><path d="M100 268 L152 262 L160 298 L140 304Z" fill="#a9adba" opacity=".55"/><path d="M90 264 L120 292 M110 266 L150 300 M70 280 L150 270" fill="none" stroke="#5f6579" stroke-width="1.5" opacity=".6"/><path d="M70 284 C84 288 104 290 118 294 C132 304 146 304 150 306 C150 322 146 340 144 351 L62 351 C62 330 64 300 70 284Z" fill="#eed7d1" /><path d="M106 351 C104 330 106 312 114 300" fill="none" stroke="#d9b9b1" stroke-width="2" opacity=".8"/><ellipse cx="82" cy="274" rx="9" ry="6" fill="#eacdc5" /><ellipse cx="176" cy="285" rx="6" ry="5" fill="#e9cbc3" /><ellipse cx="72" cy="262" rx="5" ry="9" fill="#26242a" /></g></svg></svg></g></svg><!--/FEED-->

<!-- bottom bar -->
<div class="abs" style="left:9px;top:835px;width:118px;height:45px;background:#141414;border-radius:7px">
<svg class="abs" style="left:7px;top:15.5px" width="12" height="12" viewBox="0 0 13 12"><g fill="none" stroke="#fff" stroke-width="1.400"><path d="M1 3.500h9M3.500 1 1 3.500 3.500 6M12 8.500H3M9.500 6 12 8.500 9.500 11"/></g></svg>
<span class="abs" style="left:25px;top:9.5px;font-size:16px;line-height:22px;color:#fff;white-space:nowrap;letter-spacing:-.25px">Resize Feed</span>
</div>
<div class="abs" style="left:786px;top:822px;width:356px;height:60px;background:#18181b;border:1px solid #303034;border-radius:9px"></div>
<svg class="abs" style="left:793px;top:845px" width="9" height="16" viewBox="0 0 9 16"><g fill="#d8d8d8"><rect x="0" y="0" width="2" height="2"/><rect x="6" y="0" width="2" height="2"/><rect x="0" y="6.500" width="2" height="2"/><rect x="6" y="6.500" width="2" height="2"/><rect x="0" y="13" width="2" height="2"/><rect x="6" y="13" width="2" height="2"/></g></svg>
<div class="abs" style="left:811px;top:828px;width:148px;height:52px;background:#60a5fa;border-radius:8px 0 0 8px">
<svg class="abs" style="left:18px;top:13px" width="17" height="20" viewBox="0 0 17 20"><path d="M1.500 1.800v16.400L15.500 10z" fill="none" stroke="#1c2333" stroke-width="1.900" stroke-linejoin="round"/></svg>
<span class="abs" style="left:46px;top:10.5px;font-size:19.5px;line-height:27px;color:#1c2333;white-space:nowrap">执行</span>
<svg class="abs" style="left:113px;top:18px" width="18" height="11" viewBox="0 0 18 11"><path d="M1 1l8 8.500L17 1" fill="none" stroke="#1c2333" stroke-width="2.200"/></svg>
</div>
<div class="abs" style="left:959px;top:828px;width:72px;height:52px;background:#09090b;border:1px solid #3f3f46;border-left:none;border-radius:0 8px 8px 0">
<span class="abs" style="left:16px;top:9px;font-size:20px;line-height:27px;color:#fff">1</span>
<svg class="abs" style="left:48px;top:8px" width="14" height="33" viewBox="0 0 14 33"><path d="M1 8l6-6.500L13 8M1 22.500l6 6.500L13 22.500" fill="none" stroke="#a1a1aa" stroke-width="1.800"/></svg>
</div>
<svg class="abs" style="left:1049px;top:842px" width="18" height="18" viewBox="0 0 18 18"><path d="M1 1l16 16M17 1 1 17" stroke="#8e8e96" stroke-width="2" fill="none"/></svg>
<svg class="abs" style="left:1099px;top:840px" width="21" height="21" viewBox="0 0 21 21"><rect x="1.200" y="1.200" width="18.600" height="18.600" rx="3" fill="none" stroke="#8e8e96" stroke-width="2"/></svg>
</body>
</html>
